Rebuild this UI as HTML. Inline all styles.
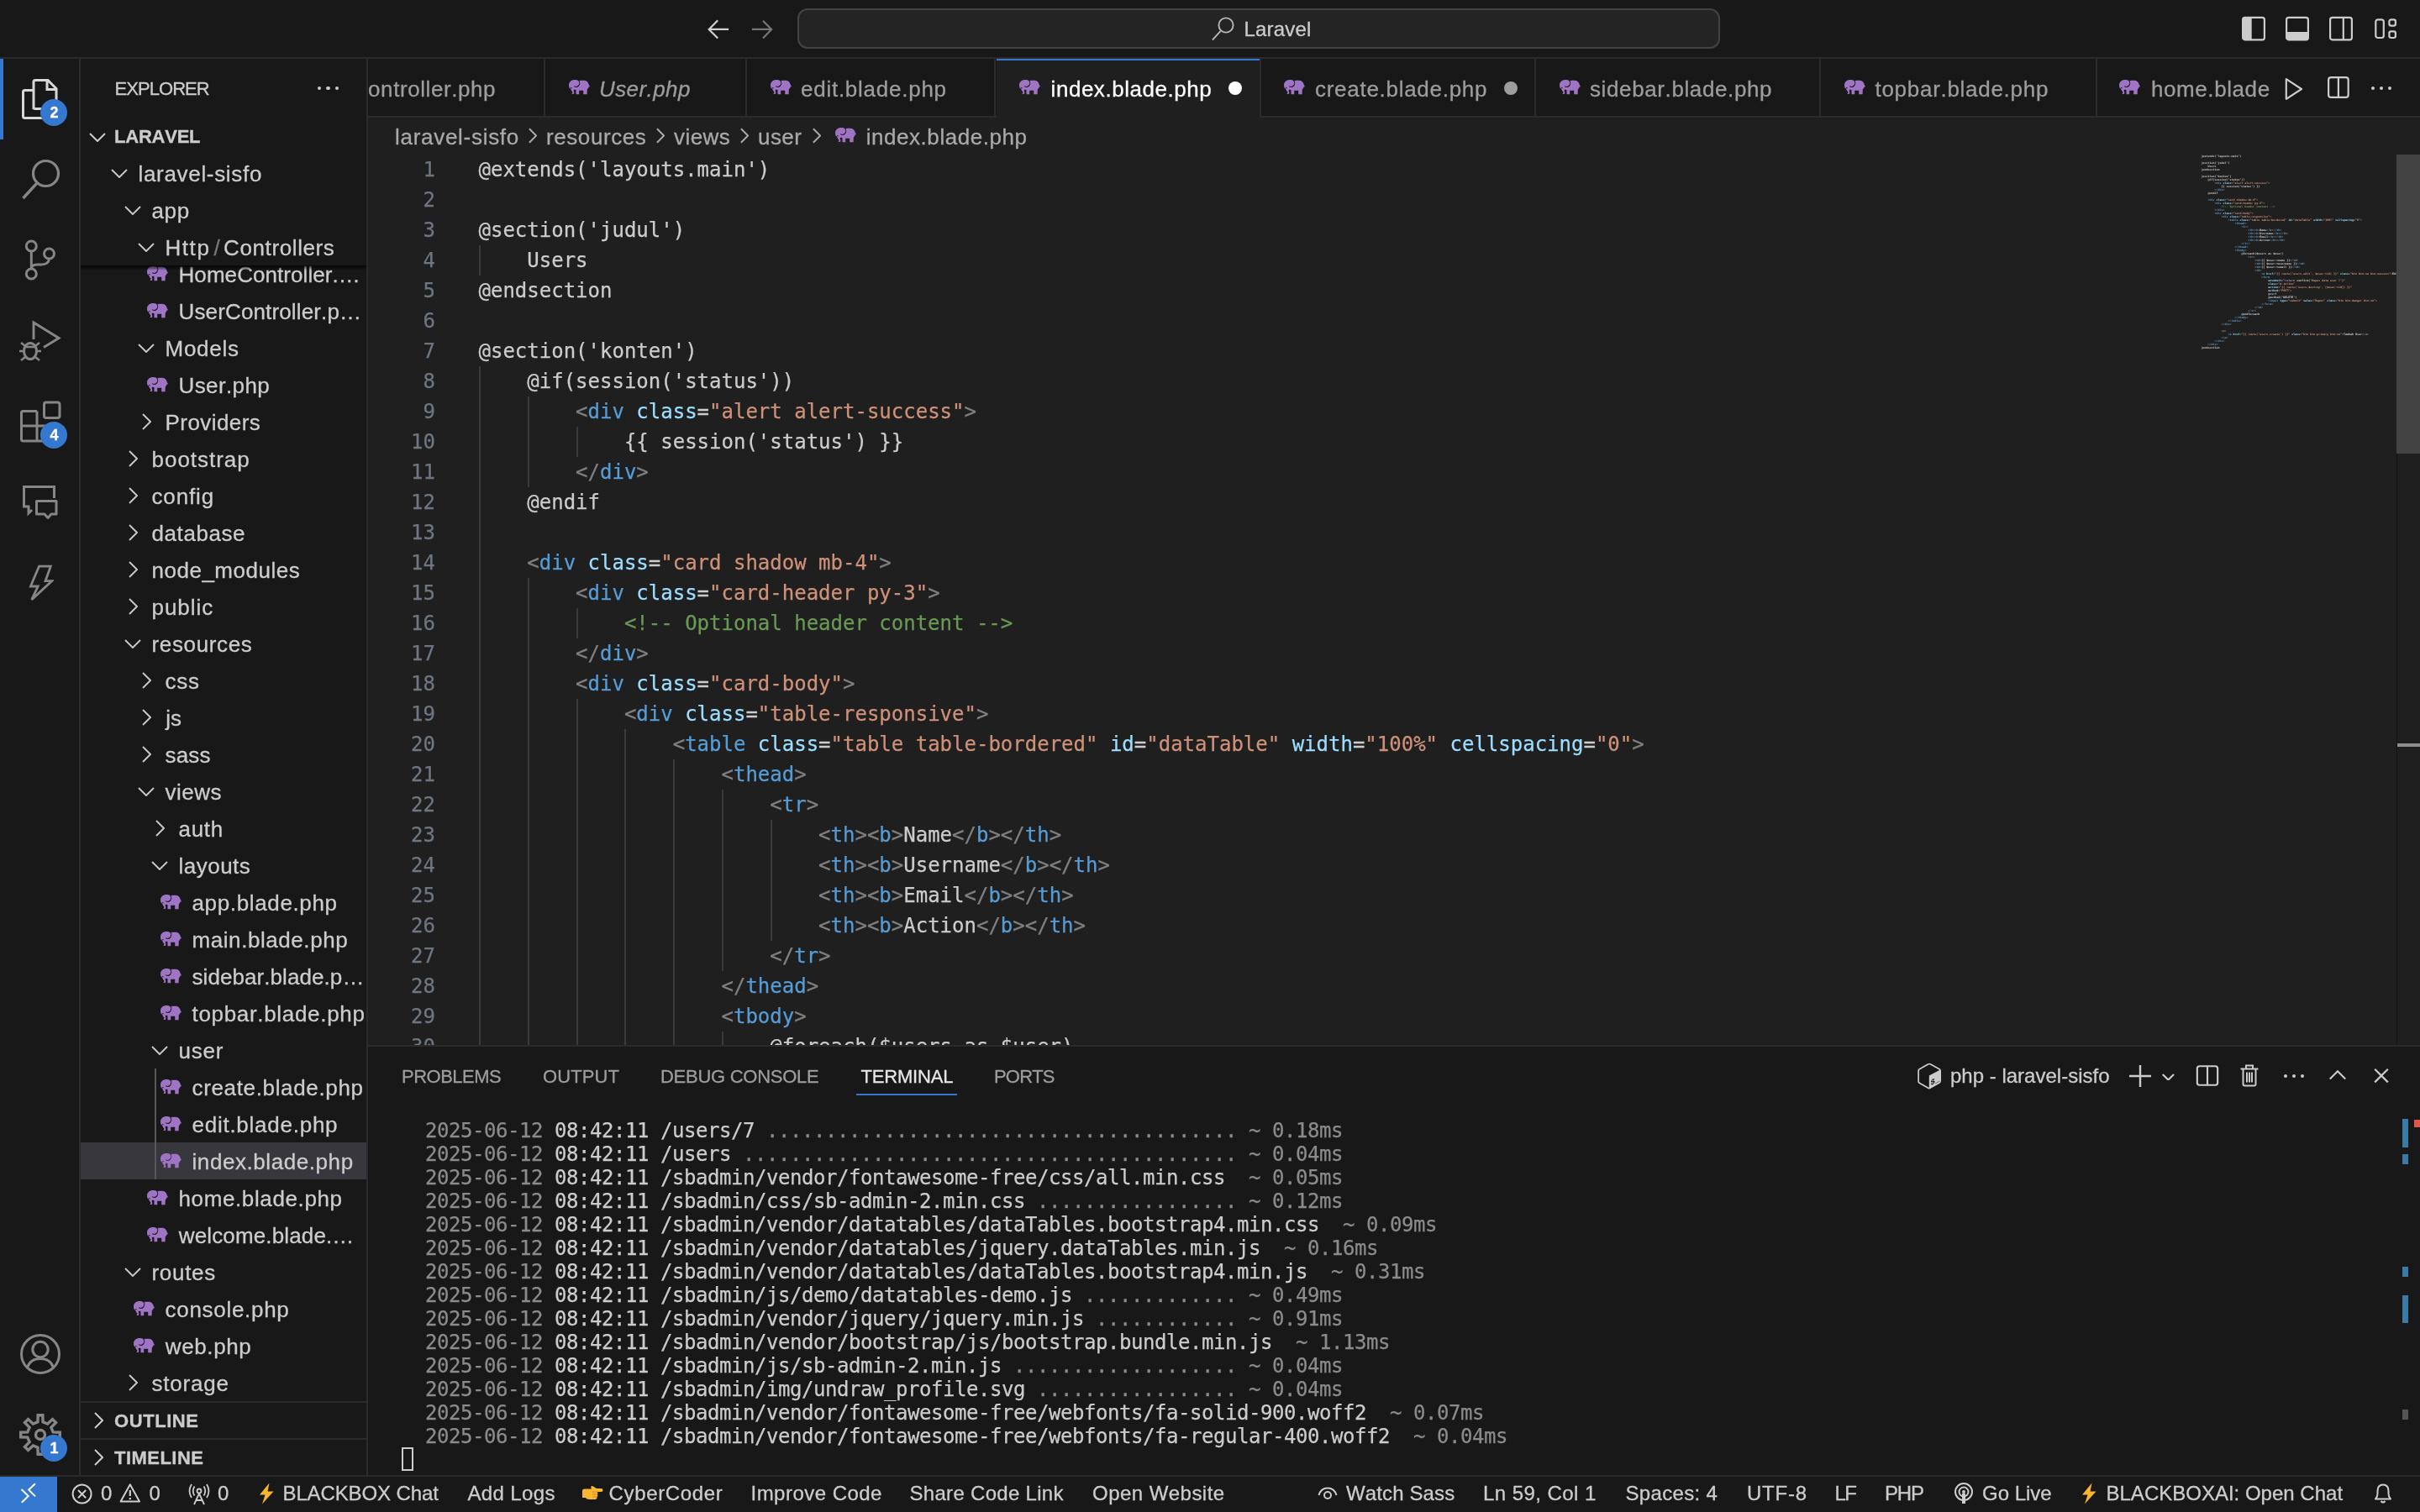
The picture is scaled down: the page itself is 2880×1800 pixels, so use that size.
<!DOCTYPE html>
<html lang="en"><head><meta charset="utf-8"><title>index.blade.php — Laravel</title>
<style>
html,body{margin:0;padding:0}
body{width:2880px;height:1800px;overflow:hidden;position:relative;background:#181818;font-family:"Liberation Sans",sans-serif;font-kerning:none;font-variant-ligatures:none;-webkit-font-smoothing:antialiased}
#w{position:absolute;left:0;top:0;width:2880px;height:1800px;will-change:transform}
.b{position:absolute;display:block}
.t{position:absolute;white-space:pre;display:block;-webkit-text-stroke:0.300px currentColor}
.ln{position:absolute;left:438px;width:80px;-webkit-text-stroke:0.250px currentColor;text-align:right;font:24px/36px "DejaVu Sans Mono","Liberation Mono",monospace;color:#6e7681;white-space:pre}
.cl{position:absolute;-webkit-text-stroke:0.250px currentColor;font:24px/36px "DejaVu Sans Mono","Liberation Mono",monospace;white-space:pre;color:#ccc}
.tm{position:absolute;-webkit-text-stroke:0.250px currentColor;left:506px;font:24px/28px "DejaVu Sans Mono","Liberation Mono",monospace;letter-spacing:-0.450px;white-space:pre;color:#ccc}
.mm{position:absolute;left:2619.500px;top:184px;width:232px;height:240px;overflow:hidden;font:bold 3.320px/4px "DejaVu Sans Mono","Liberation Mono",monospace}
.mm div{height:4px;white-space:pre}
</style></head>
<body>
<div id="w">
<div class="b" style="left:0px;top:0px;width:2880px;height:68px;background:#181818;"></div>
<div class="b" style="left:0px;top:68px;width:2880px;height:2px;background:#2b2b2b;"></div>
<svg class="b" style="left:840px;top:23px;" width="30" height="24" viewBox="0 0 30 24"><path d="M14.200 1.300L3.700 11.900L14.200 22.600M3.700 11.900H27.100" fill="none" stroke="#d0d0d0" stroke-width="2.200"/></svg>
<svg class="b" style="left:893px;top:23px;" width="30" height="24" viewBox="0 0 30 24"><path d="M15 1.800L25.200 11.900L15 22.600M25.200 11.900H1.900" fill="none" stroke="#767676" stroke-width="2.200"/></svg>
<div class="b" style="left:949px;top:10px;width:1098px;height:48px;box-sizing:border-box;background:#242424;border:2px solid #434343;border-radius:12px"></div>
<svg class="b" style="left:1441.3px;top:18.5px;" width="30" height="30" viewBox="0 0 30 30"><circle cx="18" cy="11" r="8.600" fill="none" stroke="#b8b8b8" stroke-width="1.900"/><path d="M11.600 17.900L1.900 28.700" stroke="#b8b8b8" stroke-width="1.900" fill="none"/></svg>
<span class="t" style="left:1480.5px;top:19px;font-size:24px;line-height:31px;color:#ccc;letter-spacing:0.173px;">Laravel</span>
<svg class="b" style="left:2667px;top:19px;" width="30" height="30" viewBox="0 0 30 30"><rect x="2.100" y="1.900" width="25.800" height="26.400" rx="2.600" fill="none" stroke="#ccc" stroke-width="2.200"/><path d="M4.500 2H12.700V28.200H4.500Q2.200 28.200 2.200 25.800V4.400Q2.200 2 4.500 2Z" fill="#ccc"/></svg>
<svg class="b" style="left:2719px;top:19px;" width="30" height="30" viewBox="0 0 30 30"><rect x="2.100" y="1.900" width="25.800" height="26.400" rx="2.600" fill="none" stroke="#ccc" stroke-width="2.200"/><path d="M2.200 18.900H27.800V25.800Q27.800 28.200 25.500 28.200H4.500Q2.200 28.200 2.200 25.800Z" fill="#ccc"/></svg>
<svg class="b" style="left:2771px;top:19px;" width="30" height="30" viewBox="0 0 30 30"><rect x="2.100" y="1.900" width="25.800" height="26.400" rx="2.600" fill="none" stroke="#ccc" stroke-width="2.200"/><path d="M17.800 2V28" stroke="#ccc" stroke-width="2.200"/></svg>
<svg class="b" style="left:2825px;top:21px;" width="30" height="27" viewBox="0 0 30 27"><rect x="2.300" y="2.400" width="9.500" height="21.600" rx="2.500" fill="none" stroke="#ccc" stroke-width="2.200"/><rect x="18.400" y="2.400" width="7.500" height="7.200" rx="2.200" fill="none" stroke="#ccc" stroke-width="2.200"/><rect x="18.400" y="16.300" width="7.500" height="7.700" rx="2.200" fill="none" stroke="#ccc" stroke-width="2.200"/></svg>
<div class="b" style="left:0px;top:70px;width:94px;height:1686px;background:#181818;"></div>
<div class="b" style="left:94px;top:70px;width:2px;height:1686px;background:#2b2b2b;"></div>
<div class="b" style="left:0px;top:70px;width:4px;height:96px;background:#3478cf;"></div>
<svg class="b" style="left:24px;top:92px;" width="48" height="52" viewBox="0 0 48 52"><path d="M16 38V5.5Q16 3.5 18 3.5H33L43 13.5V35.5Q43 37.5 41 37.5H18Q16 37.5 16 35.5M32 4V14.5H43" fill="none" stroke="#d7d7d7" stroke-width="3"/><path d="M15 15.5H5.5Q3.5 15.5 3.5 17.5V46.500Q3.5 48.5 5.5 48.5H28Q30 48.5 30 46.5V38" fill="none" stroke="#d7d7d7" stroke-width="3"/></svg>
<svg class="b" style="left:24px;top:188px;" width="50" height="52" viewBox="0 0 50 52"><circle cx="30.5" cy="18.5" r="15" fill="none" stroke="#868686" stroke-width="3.2"/><path d="M20 30L3.5 48" stroke="#868686" stroke-width="3.4" fill="none"/></svg>
<svg class="b" style="left:28px;top:284px;" width="42" height="52" viewBox="0 0 42 52"><circle cx="9.3" cy="9" r="6" fill="none" stroke="#868686" stroke-width="3"/><circle cx="30.5" cy="18" r="6" fill="none" stroke="#868686" stroke-width="3"/><circle cx="9.3" cy="42" r="6" fill="none" stroke="#868686" stroke-width="3"/><path d="M9.3 15V36M30.5 24Q30 31 21 31H16Q9.5 31 9.3 36" fill="none" stroke="#868686" stroke-width="3"/></svg>
<svg class="b" style="left:22px;top:380px;" width="52" height="52" viewBox="0 0 52 52"><path d="M18 24V4L48 22.500L30 33.500" fill="none" stroke="#868686" stroke-width="3"/><ellipse cx="14" cy="38" rx="7.5" ry="9.5" fill="none" stroke="#868686" stroke-width="3"/><path d="M7 33H21M1 38H6.5M21.5 38H27M3 28L8 32M25 28L20 32M3 49L8 45M25 49L20 45" fill="none" stroke="#868686" stroke-width="2.6"/></svg>
<svg class="b" style="left:23px;top:477px;" width="50" height="50" viewBox="0 0 50 50"><path d="M21 12.5H4.5Q2.500 12.5 2.500 14.5V46Q2.5 48 4.500 48H36.500Q38.500 48 38.500 46V30H2.500M21 12.500V48" fill="none" stroke="#868686" stroke-width="3"/><rect x="29.5" y="2" width="18.5" height="18.500" rx="2.5" fill="none" stroke="#868686" stroke-width="3"/></svg>
<svg class="b" style="left:26px;top:576px;" width="44" height="44" viewBox="0 0 44 44"><path d="M38.500 17V3.500H2.500V27H8V35L12 31" fill="none" stroke="#868686" stroke-width="3"/><path d="M17.500 20.500H41V36H35L31 40.500L27 36H17.500Z" fill="none" stroke="#868686" stroke-width="3" stroke-linejoin="round"/></svg>
<svg class="b" style="left:34px;top:671px;" width="30" height="46" viewBox="0 0 30 46"><path d="M12.500 3.200H26.300L20 20.700H27.600L3.700 42.900L11.200 27H2.400Z" fill="none" stroke="#868686" stroke-width="2.800" stroke-linejoin="miter"/></svg>
<svg class="b" style="left:23px;top:1587px;" width="50" height="50" viewBox="0 0 50 50"><circle cx="25" cy="25" r="22.500" fill="none" stroke="#868686" stroke-width="3"/><circle cx="25" cy="19.500" r="9.200" fill="none" stroke="#868686" stroke-width="3"/><path d="M9.500 41Q13 30.500 25 30.500Q37 30.500 40.500 41" fill="none" stroke="#868686" stroke-width="3"/></svg>
<svg class="b" style="left:23px;top:1683px;" width="50" height="50" viewBox="0 0 50 50"><path d="M22.2 1.7L27.8 1.7L28.1 9.8L33.6 12.1L39.5 6.5L43.5 10.5L37.9 16.4L40.2 21.9L48.3 22.2L48.3 27.8L40.2 28.1L37.9 33.6L43.5 39.5L39.5 43.5L33.6 37.9L28.1 40.2L27.8 48.3L22.2 48.3L21.9 40.2L16.4 37.9L10.5 43.5L6.5 39.5L12.1 33.6L9.8 28.1L1.7 27.8L1.7 22.2L9.8 21.9L12.1 16.4L6.5 10.5L10.5 6.5L16.4 12.1L21.9 9.8Z" fill="none" stroke="#868686" stroke-width="3.400" stroke-linejoin="miter"/><circle cx="25" cy="25" r="5.500" fill="none" stroke="#868686" stroke-width="3.400"/></svg>
<div class="b" style="left:47.5px;top:117.7px;width:32px;height:32px;border-radius:16px;background:#3478cf"></div>
<span class="t" style="left:59.5px;top:122px;font-size:18px;line-height:24px;color:#fff;letter-spacing:0.000px;font-weight:700;">2</span>
<div class="b" style="left:47.5px;top:502px;width:32px;height:32px;border-radius:16px;background:#3478cf"></div>
<span class="t" style="left:59.5px;top:506px;font-size:18px;line-height:24px;color:#fff;letter-spacing:0.000px;font-weight:700;">4</span>
<div class="b" style="left:47.5px;top:1708px;width:32px;height:32px;border-radius:16px;background:#3478cf"></div>
<span class="t" style="left:59.5px;top:1712px;font-size:18px;line-height:24px;color:#fff;letter-spacing:0.000px;font-weight:700;">1</span>
<div class="b" style="left:96px;top:70px;width:340px;height:1686px;background:#181818;"></div>
<div class="b" style="left:436px;top:70px;width:2px;height:1686px;background:#2b2b2b;"></div>
<span class="t" style="left:136.5px;top:91px;font-size:22px;line-height:29px;color:#ccc;letter-spacing:-0.946px;">EXPLORER</span>
<div class="b" style="left:378px;top:102.800px;width:4.400px;height:4.400px;border-radius:2.200px;background:#ccc"></div>
<div class="b" style="left:388.3px;top:102.800px;width:4.400px;height:4.400px;border-radius:2.200px;background:#ccc"></div>
<div class="b" style="left:398.6px;top:102.800px;width:4.400px;height:4.400px;border-radius:2.200px;background:#ccc"></div>
<div class="b" style="left:96px;top:316px;width:340px;height:1352px;overflow:hidden"><div class="b" style="left:-96px;top:-316px;width:436px;height:1800px">
<div class="b" style="left:96px;top:1360px;width:340px;height:44px;background:#37373d;"></div>
<svg class="b" style="left:175px;top:317px;" width="25" height="18" viewBox="0 0 25 18"><path fill="#a074c4" d="M0 6.500C0 2.500 3 0 7 0C9.500 0 11 0.500 12 1.500C12.800 1 13.500 0.700 14.500 0.700L18.500 0.700C21.500 0.900 23.300 3.500 23.900 6.300C24.500 6.800 24.900 7.500 25 8.400L23.900 7.900C23.600 9 22.600 10.500 21.800 11.500L21.600 17.200L17.200 17.200L17.200 12.800L12.200 12.800L12.200 17.200L8.600 17.200L8.400 12C7.500 11.600 6.500 11.600 5.800 12C5.600 13 5.900 14 6.300 15C6.600 16.400 5.600 17.300 4 17L3.600 16C4.600 15.800 4.600 15 4.100 14.200C3 12.800 2.200 11.500 2 10.200L0.900 10.200C0.300 9.200 0 8 0 6.500Z"/><path fill="none" stroke="#181818" stroke-width="1.100" d="M11.700 1C13.100 2.600 13 5.400 11.500 7C10.200 8.400 8 8.800 6.300 7.600"/><path fill="#181818" d="M1.900 9.300L3.600 9.100L3.300 10.300L2 10.300Z"/></svg>
<span class="t" style="left:212.5px;top:310px;font-size:26px;line-height:34px;color:#ccc;letter-spacing:0.071px;">HomeController.…</span>
<svg class="b" style="left:175px;top:361px;" width="25" height="18" viewBox="0 0 25 18"><path fill="#a074c4" d="M0 6.500C0 2.500 3 0 7 0C9.500 0 11 0.500 12 1.500C12.800 1 13.500 0.700 14.500 0.700L18.500 0.700C21.500 0.900 23.300 3.500 23.900 6.300C24.500 6.800 24.900 7.500 25 8.400L23.900 7.900C23.600 9 22.600 10.500 21.800 11.500L21.600 17.200L17.200 17.200L17.200 12.800L12.200 12.800L12.200 17.200L8.600 17.200L8.400 12C7.500 11.600 6.500 11.600 5.800 12C5.600 13 5.900 14 6.300 15C6.600 16.400 5.600 17.300 4 17L3.600 16C4.600 15.800 4.600 15 4.100 14.200C3 12.800 2.200 11.500 2 10.200L0.900 10.200C0.300 9.200 0 8 0 6.500Z"/><path fill="none" stroke="#181818" stroke-width="1.100" d="M11.700 1C13.100 2.600 13 5.400 11.500 7C10.200 8.400 8 8.800 6.300 7.600"/><path fill="#181818" d="M1.900 9.300L3.600 9.100L3.300 10.300L2 10.300Z"/></svg>
<span class="t" style="left:212.5px;top:354px;font-size:26px;line-height:34px;color:#ccc;letter-spacing:0.141px;">UserController.p…</span>
<svg class="b" style="left:164px;top:409.3px;" width="20" height="11" viewBox="0 0 20 11"><path d="M1 1L10 10L19 1" fill="none" stroke="#c5c5c5" stroke-width="2"/></svg>
<span class="t" style="left:196.5px;top:398px;font-size:26px;line-height:34px;color:#ccc;letter-spacing:0.744px;">Models</span>
<svg class="b" style="left:175px;top:449px;" width="25" height="18" viewBox="0 0 25 18"><path fill="#a074c4" d="M0 6.500C0 2.500 3 0 7 0C9.500 0 11 0.500 12 1.500C12.800 1 13.500 0.700 14.500 0.700L18.500 0.700C21.500 0.900 23.300 3.500 23.900 6.300C24.500 6.800 24.900 7.500 25 8.400L23.900 7.900C23.600 9 22.600 10.500 21.800 11.500L21.600 17.200L17.200 17.200L17.200 12.800L12.200 12.800L12.200 17.200L8.600 17.200L8.400 12C7.500 11.600 6.500 11.600 5.800 12C5.600 13 5.900 14 6.300 15C6.600 16.400 5.600 17.300 4 17L3.600 16C4.600 15.800 4.600 15 4.100 14.200C3 12.800 2.200 11.500 2 10.200L0.900 10.200C0.300 9.200 0 8 0 6.500Z"/><path fill="none" stroke="#181818" stroke-width="1.100" d="M11.700 1C13.100 2.600 13 5.400 11.500 7C10.200 8.400 8 8.800 6.300 7.600"/><path fill="#181818" d="M1.900 9.300L3.600 9.100L3.300 10.300L2 10.300Z"/></svg>
<span class="t" style="left:212.5px;top:442px;font-size:26px;line-height:34px;color:#ccc;letter-spacing:0.397px;">User.php</span>
<svg class="b" style="left:169px;top:492px;" width="11" height="20" viewBox="0 0 11 20"><path d="M1 1L10 10L1 19" fill="none" stroke="#c5c5c5" stroke-width="2"/></svg>
<span class="t" style="left:196.5px;top:486px;font-size:26px;line-height:34px;color:#ccc;letter-spacing:0.440px;">Providers</span>
<svg class="b" style="left:153px;top:536px;" width="11" height="20" viewBox="0 0 11 20"><path d="M1 1L10 10L1 19" fill="none" stroke="#c5c5c5" stroke-width="2"/></svg>
<span class="t" style="left:180.5px;top:530px;font-size:26px;line-height:34px;color:#ccc;letter-spacing:0.983px;">bootstrap</span>
<svg class="b" style="left:153px;top:580px;" width="11" height="20" viewBox="0 0 11 20"><path d="M1 1L10 10L1 19" fill="none" stroke="#c5c5c5" stroke-width="2"/></svg>
<span class="t" style="left:180.5px;top:574px;font-size:26px;line-height:34px;color:#ccc;letter-spacing:0.864px;">config</span>
<svg class="b" style="left:153px;top:624px;" width="11" height="20" viewBox="0 0 11 20"><path d="M1 1L10 10L1 19" fill="none" stroke="#c5c5c5" stroke-width="2"/></svg>
<span class="t" style="left:180.5px;top:618px;font-size:26px;line-height:34px;color:#ccc;letter-spacing:0.580px;">database</span>
<svg class="b" style="left:153px;top:668px;" width="11" height="20" viewBox="0 0 11 20"><path d="M1 1L10 10L1 19" fill="none" stroke="#c5c5c5" stroke-width="2"/></svg>
<span class="t" style="left:180.5px;top:662px;font-size:26px;line-height:34px;color:#ccc;letter-spacing:0.515px;">node_modules</span>
<svg class="b" style="left:153px;top:712px;" width="11" height="20" viewBox="0 0 11 20"><path d="M1 1L10 10L1 19" fill="none" stroke="#c5c5c5" stroke-width="2"/></svg>
<span class="t" style="left:180.5px;top:706px;font-size:26px;line-height:34px;color:#ccc;letter-spacing:0.976px;">public</span>
<svg class="b" style="left:148px;top:761.3px;" width="20" height="11" viewBox="0 0 20 11"><path d="M1 1L10 10L19 1" fill="none" stroke="#c5c5c5" stroke-width="2"/></svg>
<span class="t" style="left:180.5px;top:750px;font-size:26px;line-height:34px;color:#ccc;letter-spacing:0.650px;">resources</span>
<svg class="b" style="left:169px;top:800px;" width="11" height="20" viewBox="0 0 11 20"><path d="M1 1L10 10L1 19" fill="none" stroke="#c5c5c5" stroke-width="2"/></svg>
<span class="t" style="left:196.5px;top:794px;font-size:26px;line-height:34px;color:#ccc;letter-spacing:0.750px;">css</span>
<svg class="b" style="left:169px;top:844px;" width="11" height="20" viewBox="0 0 11 20"><path d="M1 1L10 10L1 19" fill="none" stroke="#c5c5c5" stroke-width="2"/></svg>
<span class="t" style="left:197.3px;top:838px;font-size:26px;line-height:34px;color:#ccc;letter-spacing:0.000px;">js</span>
<svg class="b" style="left:169px;top:888px;" width="11" height="20" viewBox="0 0 11 20"><path d="M1 1L10 10L1 19" fill="none" stroke="#c5c5c5" stroke-width="2"/></svg>
<span class="t" style="left:196.5px;top:882px;font-size:26px;line-height:34px;color:#ccc;letter-spacing:0.147px;">sass</span>
<svg class="b" style="left:164px;top:937.3px;" width="20" height="11" viewBox="0 0 20 11"><path d="M1 1L10 10L19 1" fill="none" stroke="#c5c5c5" stroke-width="2"/></svg>
<span class="t" style="left:196.5px;top:926px;font-size:26px;line-height:34px;color:#ccc;letter-spacing:0.500px;">views</span>
<svg class="b" style="left:185px;top:976px;" width="11" height="20" viewBox="0 0 11 20"><path d="M1 1L10 10L1 19" fill="none" stroke="#c5c5c5" stroke-width="2"/></svg>
<span class="t" style="left:212.5px;top:970px;font-size:26px;line-height:34px;color:#ccc;letter-spacing:0.680px;">auth</span>
<svg class="b" style="left:180px;top:1025.3px;" width="20" height="11" viewBox="0 0 20 11"><path d="M1 1L10 10L19 1" fill="none" stroke="#c5c5c5" stroke-width="2"/></svg>
<span class="t" style="left:212.5px;top:1014px;font-size:26px;line-height:34px;color:#ccc;letter-spacing:0.487px;">layouts</span>
<svg class="b" style="left:191px;top:1065px;" width="25" height="18" viewBox="0 0 25 18"><path fill="#a074c4" d="M0 6.500C0 2.500 3 0 7 0C9.500 0 11 0.500 12 1.500C12.800 1 13.500 0.700 14.500 0.700L18.500 0.700C21.500 0.900 23.300 3.500 23.900 6.300C24.500 6.800 24.900 7.500 25 8.400L23.900 7.900C23.600 9 22.600 10.500 21.800 11.500L21.600 17.200L17.200 17.200L17.200 12.800L12.200 12.800L12.200 17.200L8.600 17.200L8.400 12C7.500 11.600 6.500 11.600 5.800 12C5.600 13 5.900 14 6.300 15C6.600 16.400 5.600 17.300 4 17L3.600 16C4.600 15.800 4.600 15 4.100 14.200C3 12.800 2.200 11.500 2 10.200L0.900 10.200C0.300 9.200 0 8 0 6.500Z"/><path fill="none" stroke="#181818" stroke-width="1.100" d="M11.700 1C13.100 2.600 13 5.400 11.500 7C10.200 8.400 8 8.800 6.300 7.600"/><path fill="#181818" d="M1.900 9.300L3.600 9.100L3.300 10.300L2 10.300Z"/></svg>
<span class="t" style="left:228.5px;top:1058px;font-size:26px;line-height:34px;color:#ccc;letter-spacing:0.643px;">app.blade.php</span>
<svg class="b" style="left:191px;top:1109px;" width="25" height="18" viewBox="0 0 25 18"><path fill="#a074c4" d="M0 6.500C0 2.500 3 0 7 0C9.500 0 11 0.500 12 1.500C12.800 1 13.500 0.700 14.500 0.700L18.500 0.700C21.500 0.900 23.300 3.500 23.900 6.300C24.500 6.800 24.900 7.500 25 8.400L23.900 7.900C23.600 9 22.600 10.500 21.800 11.500L21.600 17.200L17.200 17.200L17.200 12.800L12.200 12.800L12.200 17.200L8.600 17.200L8.400 12C7.500 11.600 6.500 11.600 5.800 12C5.600 13 5.900 14 6.300 15C6.600 16.400 5.600 17.300 4 17L3.600 16C4.600 15.800 4.600 15 4.100 14.200C3 12.800 2.200 11.500 2 10.200L0.900 10.200C0.300 9.200 0 8 0 6.500Z"/><path fill="none" stroke="#181818" stroke-width="1.100" d="M11.700 1C13.100 2.600 13 5.400 11.500 7C10.200 8.400 8 8.800 6.300 7.600"/><path fill="#181818" d="M1.900 9.300L3.600 9.100L3.300 10.300L2 10.300Z"/></svg>
<span class="t" style="left:228.5px;top:1102px;font-size:26px;line-height:34px;color:#ccc;letter-spacing:0.568px;">main.blade.php</span>
<svg class="b" style="left:191px;top:1153px;" width="25" height="18" viewBox="0 0 25 18"><path fill="#a074c4" d="M0 6.500C0 2.500 3 0 7 0C9.500 0 11 0.500 12 1.500C12.800 1 13.500 0.700 14.500 0.700L18.500 0.700C21.500 0.900 23.300 3.500 23.900 6.300C24.500 6.800 24.900 7.500 25 8.400L23.900 7.900C23.600 9 22.600 10.500 21.800 11.500L21.600 17.200L17.200 17.200L17.200 12.800L12.200 12.800L12.200 17.200L8.600 17.200L8.400 12C7.500 11.600 6.500 11.600 5.800 12C5.600 13 5.900 14 6.300 15C6.600 16.400 5.600 17.300 4 17L3.600 16C4.600 15.800 4.600 15 4.100 14.200C3 12.800 2.200 11.500 2 10.200L0.900 10.200C0.300 9.200 0 8 0 6.500Z"/><path fill="none" stroke="#181818" stroke-width="1.100" d="M11.700 1C13.100 2.600 13 5.400 11.500 7C10.200 8.400 8 8.800 6.300 7.600"/><path fill="#181818" d="M1.900 9.300L3.600 9.100L3.300 10.300L2 10.300Z"/></svg>
<span class="t" style="left:228.5px;top:1146px;font-size:26px;line-height:34px;color:#ccc;letter-spacing:0.072px;">sidebar.blade.p…</span>
<svg class="b" style="left:191px;top:1197px;" width="25" height="18" viewBox="0 0 25 18"><path fill="#a074c4" d="M0 6.500C0 2.500 3 0 7 0C9.500 0 11 0.500 12 1.500C12.800 1 13.500 0.700 14.500 0.700L18.500 0.700C21.500 0.900 23.300 3.500 23.900 6.300C24.500 6.800 24.900 7.500 25 8.400L23.900 7.900C23.600 9 22.600 10.500 21.800 11.500L21.600 17.200L17.200 17.200L17.200 12.800L12.200 12.800L12.200 17.200L8.600 17.200L8.400 12C7.500 11.600 6.500 11.600 5.800 12C5.600 13 5.900 14 6.300 15C6.600 16.400 5.600 17.300 4 17L3.600 16C4.600 15.800 4.600 15 4.100 14.200C3 12.800 2.200 11.500 2 10.200L0.900 10.200C0.300 9.200 0 8 0 6.500Z"/><path fill="none" stroke="#181818" stroke-width="1.100" d="M11.700 1C13.100 2.600 13 5.400 11.500 7C10.200 8.400 8 8.800 6.300 7.600"/><path fill="#181818" d="M1.900 9.300L3.600 9.100L3.300 10.300L2 10.300Z"/></svg>
<span class="t" style="left:228.5px;top:1190px;font-size:26px;line-height:34px;color:#ccc;letter-spacing:0.680px;">topbar.blade.php</span>
<svg class="b" style="left:180px;top:1245.3px;" width="20" height="11" viewBox="0 0 20 11"><path d="M1 1L10 10L19 1" fill="none" stroke="#c5c5c5" stroke-width="2"/></svg>
<span class="t" style="left:212.5px;top:1234px;font-size:26px;line-height:34px;color:#ccc;letter-spacing:0.767px;">user</span>
<svg class="b" style="left:191px;top:1285px;" width="25" height="18" viewBox="0 0 25 18"><path fill="#a074c4" d="M0 6.500C0 2.500 3 0 7 0C9.500 0 11 0.500 12 1.500C12.800 1 13.500 0.700 14.500 0.700L18.500 0.700C21.500 0.900 23.300 3.500 23.900 6.300C24.500 6.800 24.900 7.500 25 8.400L23.900 7.900C23.600 9 22.600 10.500 21.800 11.500L21.600 17.200L17.200 17.200L17.200 12.800L12.200 12.800L12.200 17.200L8.600 17.200L8.400 12C7.500 11.600 6.500 11.600 5.800 12C5.600 13 5.900 14 6.300 15C6.600 16.400 5.600 17.300 4 17L3.600 16C4.600 15.800 4.600 15 4.100 14.200C3 12.800 2.200 11.500 2 10.200L0.900 10.200C0.300 9.200 0 8 0 6.500Z"/><path fill="none" stroke="#181818" stroke-width="1.100" d="M11.700 1C13.100 2.600 13 5.400 11.500 7C10.200 8.400 8 8.800 6.300 7.600"/><path fill="#181818" d="M1.900 9.300L3.600 9.100L3.300 10.300L2 10.300Z"/></svg>
<span class="t" style="left:228.5px;top:1278px;font-size:26px;line-height:34px;color:#ccc;letter-spacing:0.651px;">create.blade.php</span>
<svg class="b" style="left:191px;top:1329px;" width="25" height="18" viewBox="0 0 25 18"><path fill="#a074c4" d="M0 6.500C0 2.500 3 0 7 0C9.500 0 11 0.500 12 1.500C12.800 1 13.500 0.700 14.500 0.700L18.500 0.700C21.500 0.900 23.300 3.500 23.900 6.300C24.500 6.800 24.900 7.500 25 8.400L23.900 7.900C23.600 9 22.600 10.500 21.800 11.500L21.600 17.200L17.200 17.200L17.200 12.800L12.200 12.800L12.200 17.200L8.600 17.200L8.400 12C7.500 11.600 6.500 11.600 5.800 12C5.600 13 5.900 14 6.300 15C6.600 16.400 5.600 17.300 4 17L3.600 16C4.600 15.800 4.600 15 4.100 14.200C3 12.800 2.200 11.500 2 10.200L0.900 10.200C0.300 9.200 0 8 0 6.500Z"/><path fill="none" stroke="#181818" stroke-width="1.100" d="M11.700 1C13.100 2.600 13 5.400 11.500 7C10.200 8.400 8 8.800 6.300 7.600"/><path fill="#181818" d="M1.900 9.300L3.600 9.100L3.300 10.300L2 10.300Z"/></svg>
<span class="t" style="left:228.5px;top:1322px;font-size:26px;line-height:34px;color:#ccc;letter-spacing:0.745px;">edit.blade.php</span>
<svg class="b" style="left:191px;top:1373px;" width="25" height="18" viewBox="0 0 25 18"><path fill="#a074c4" d="M0 6.500C0 2.500 3 0 7 0C9.500 0 11 0.500 12 1.500C12.800 1 13.500 0.700 14.500 0.700L18.500 0.700C21.500 0.900 23.300 3.500 23.900 6.300C24.500 6.800 24.900 7.500 25 8.400L23.900 7.900C23.600 9 22.600 10.500 21.800 11.500L21.600 17.200L17.200 17.200L17.200 12.800L12.200 12.800L12.200 17.200L8.600 17.200L8.400 12C7.500 11.600 6.500 11.600 5.800 12C5.600 13 5.900 14 6.300 15C6.600 16.400 5.600 17.300 4 17L3.600 16C4.600 15.800 4.600 15 4.100 14.200C3 12.800 2.200 11.500 2 10.200L0.900 10.200C0.300 9.200 0 8 0 6.500Z"/><path fill="none" stroke="#37373d" stroke-width="1.100" d="M11.700 1C13.100 2.600 13 5.400 11.500 7C10.200 8.400 8 8.800 6.300 7.600"/><path fill="#37373d" d="M1.900 9.300L3.600 9.100L3.300 10.300L2 10.300Z"/></svg>
<span class="t" style="left:228.5px;top:1366px;font-size:26px;line-height:34px;color:#ccc;letter-spacing:0.571px;">index.blade.php</span>
<svg class="b" style="left:175px;top:1417px;" width="25" height="18" viewBox="0 0 25 18"><path fill="#a074c4" d="M0 6.500C0 2.500 3 0 7 0C9.500 0 11 0.500 12 1.500C12.800 1 13.500 0.700 14.500 0.700L18.500 0.700C21.500 0.900 23.300 3.500 23.900 6.300C24.500 6.800 24.900 7.500 25 8.400L23.900 7.900C23.600 9 22.600 10.500 21.800 11.500L21.600 17.200L17.200 17.200L17.200 12.800L12.200 12.800L12.200 17.200L8.600 17.200L8.400 12C7.500 11.600 6.500 11.600 5.800 12C5.600 13 5.900 14 6.300 15C6.600 16.400 5.600 17.300 4 17L3.600 16C4.600 15.800 4.600 15 4.100 14.200C3 12.800 2.200 11.500 2 10.200L0.900 10.200C0.300 9.200 0 8 0 6.500Z"/><path fill="none" stroke="#181818" stroke-width="1.100" d="M11.700 1C13.100 2.600 13 5.400 11.500 7C10.200 8.400 8 8.800 6.300 7.600"/><path fill="#181818" d="M1.900 9.300L3.600 9.100L3.300 10.300L2 10.300Z"/></svg>
<span class="t" style="left:212.5px;top:1410px;font-size:26px;line-height:34px;color:#ccc;letter-spacing:0.618px;">home.blade.php</span>
<svg class="b" style="left:175px;top:1461px;" width="25" height="18" viewBox="0 0 25 18"><path fill="#a074c4" d="M0 6.500C0 2.500 3 0 7 0C9.500 0 11 0.500 12 1.500C12.800 1 13.500 0.700 14.500 0.700L18.500 0.700C21.500 0.900 23.300 3.500 23.900 6.300C24.500 6.800 24.900 7.500 25 8.400L23.900 7.900C23.600 9 22.600 10.500 21.800 11.500L21.600 17.200L17.200 17.200L17.200 12.800L12.200 12.800L12.200 17.200L8.600 17.200L8.400 12C7.500 11.600 6.500 11.600 5.800 12C5.600 13 5.900 14 6.300 15C6.600 16.400 5.600 17.300 4 17L3.600 16C4.600 15.800 4.600 15 4.100 14.200C3 12.800 2.200 11.500 2 10.200L0.900 10.200C0.300 9.200 0 8 0 6.500Z"/><path fill="none" stroke="#181818" stroke-width="1.100" d="M11.700 1C13.100 2.600 13 5.400 11.500 7C10.200 8.400 8 8.800 6.300 7.600"/><path fill="#181818" d="M1.900 9.300L3.600 9.100L3.300 10.300L2 10.300Z"/></svg>
<span class="t" style="left:212.8px;top:1454px;font-size:26px;line-height:34px;color:#ccc;letter-spacing:0.137px;">welcome.blade.…</span>
<svg class="b" style="left:148px;top:1509.3px;" width="20" height="11" viewBox="0 0 20 11"><path d="M1 1L10 10L19 1" fill="none" stroke="#c5c5c5" stroke-width="2"/></svg>
<span class="t" style="left:180.5px;top:1498px;font-size:26px;line-height:34px;color:#ccc;letter-spacing:0.692px;">routes</span>
<svg class="b" style="left:159px;top:1549px;" width="25" height="18" viewBox="0 0 25 18"><path fill="#a074c4" d="M0 6.500C0 2.500 3 0 7 0C9.500 0 11 0.500 12 1.500C12.800 1 13.500 0.700 14.500 0.700L18.500 0.700C21.500 0.900 23.300 3.500 23.900 6.300C24.500 6.800 24.900 7.500 25 8.400L23.900 7.900C23.600 9 22.600 10.500 21.800 11.500L21.600 17.200L17.200 17.200L17.200 12.800L12.200 12.800L12.200 17.200L8.600 17.200L8.400 12C7.500 11.600 6.500 11.600 5.800 12C5.600 13 5.900 14 6.300 15C6.600 16.400 5.600 17.300 4 17L3.600 16C4.600 15.800 4.600 15 4.100 14.200C3 12.800 2.200 11.500 2 10.200L0.900 10.200C0.300 9.200 0 8 0 6.500Z"/><path fill="none" stroke="#181818" stroke-width="1.100" d="M11.700 1C13.100 2.600 13 5.400 11.500 7C10.200 8.400 8 8.800 6.300 7.600"/><path fill="#181818" d="M1.900 9.300L3.600 9.100L3.300 10.300L2 10.300Z"/></svg>
<span class="t" style="left:196.5px;top:1542px;font-size:26px;line-height:34px;color:#ccc;letter-spacing:0.708px;">console.php</span>
<svg class="b" style="left:159px;top:1593px;" width="25" height="18" viewBox="0 0 25 18"><path fill="#a074c4" d="M0 6.500C0 2.500 3 0 7 0C9.500 0 11 0.500 12 1.500C12.800 1 13.500 0.700 14.500 0.700L18.500 0.700C21.500 0.900 23.300 3.500 23.900 6.300C24.500 6.800 24.900 7.500 25 8.400L23.900 7.900C23.600 9 22.600 10.500 21.800 11.500L21.600 17.200L17.200 17.200L17.200 12.800L12.200 12.800L12.200 17.200L8.600 17.200L8.400 12C7.500 11.600 6.500 11.600 5.800 12C5.600 13 5.900 14 6.300 15C6.600 16.400 5.600 17.300 4 17L3.600 16C4.600 15.800 4.600 15 4.100 14.200C3 12.800 2.200 11.500 2 10.200L0.900 10.200C0.300 9.200 0 8 0 6.500Z"/><path fill="none" stroke="#181818" stroke-width="1.100" d="M11.700 1C13.100 2.600 13 5.400 11.500 7C10.200 8.400 8 8.800 6.300 7.600"/><path fill="#181818" d="M1.900 9.300L3.600 9.100L3.300 10.300L2 10.300Z"/></svg>
<span class="t" style="left:196.8px;top:1586px;font-size:26px;line-height:34px;color:#ccc;letter-spacing:0.623px;">web.php</span>
<svg class="b" style="left:153px;top:1636px;" width="11" height="20" viewBox="0 0 11 20"><path d="M1 1L10 10L1 19" fill="none" stroke="#c5c5c5" stroke-width="2"/></svg>
<span class="t" style="left:180.5px;top:1630px;font-size:26px;line-height:34px;color:#ccc;letter-spacing:0.783px;">storage</span>
<div class="b" style="left:184px;top:1272px;width:2px;height:132px;background:#585858;"></div>
</div></div>
<svg class="b" style="left:106px;top:157.5px;" width="20" height="11" viewBox="0 0 20 11"><path d="M1 1L10 10L19 1" fill="none" stroke="#ccc" stroke-width="2"/></svg>
<span class="t" style="left:136.0px;top:148px;font-size:22px;line-height:29px;color:#ccc;letter-spacing:-0.223px;font-weight:700;">LARAVEL</span>
<svg class="b" style="left:132px;top:201.3px;" width="20" height="11" viewBox="0 0 20 11"><path d="M1 1L10 10L19 1" fill="none" stroke="#c5c5c5" stroke-width="2"/></svg>
<span class="t" style="left:164.5px;top:190px;font-size:26px;line-height:34px;color:#ccc;letter-spacing:0.680px;">laravel-sisfo</span>
<svg class="b" style="left:148px;top:245.3px;" width="20" height="11" viewBox="0 0 20 11"><path d="M1 1L10 10L19 1" fill="none" stroke="#c5c5c5" stroke-width="2"/></svg>
<span class="t" style="left:180.5px;top:234px;font-size:26px;line-height:34px;color:#ccc;letter-spacing:0.660px;">app</span>
<svg class="b" style="left:164px;top:289.3px;" width="20" height="11" viewBox="0 0 20 11"><path d="M1 1L10 10L19 1" fill="none" stroke="#c5c5c5" stroke-width="2"/></svg>
<span class="t" style="left:196.5px;top:278px;font-size:26px;line-height:34px;color:#ccc;letter-spacing:1.553px;">Http</span>
<span class="t" style="left:254.5px;top:278px;font-size:26px;line-height:34px;color:#7a7a7a;letter-spacing:0.000px;">/</span>
<span class="t" style="left:266.0px;top:278px;font-size:26px;line-height:34px;color:#ccc;letter-spacing:0.616px;">Controllers</span>
<div class="b" style="left:96px;top:316px;width:340px;height:6px;background:linear-gradient(#000c,#0000)"></div>
<div class="b" style="left:96px;top:1668px;width:340px;height:2px;background:#2b2b2b;"></div>
<div class="b" style="left:96px;top:1712px;width:340px;height:2px;background:#2b2b2b;"></div>
<svg class="b" style="left:111.5px;top:1680.5px;" width="11" height="20" viewBox="0 0 11 20"><path d="M1 1L10 10L1 19" fill="none" stroke="#ccc" stroke-width="2"/></svg>
<span class="t" style="left:136.0px;top:1677px;font-size:22px;line-height:29px;color:#ccc;letter-spacing:0.570px;font-weight:700;">OUTLINE</span>
<svg class="b" style="left:111.5px;top:1724.5px;" width="11" height="20" viewBox="0 0 11 20"><path d="M1 1L10 10L1 19" fill="none" stroke="#ccc" stroke-width="2"/></svg>
<span class="t" style="left:136.0px;top:1721px;font-size:22px;line-height:29px;color:#ccc;letter-spacing:0.466px;font-weight:700;">TIMELINE</span>
<div class="b" style="left:438px;top:70px;width:2442px;height:1174px;background:#1f1f1f;"></div>
<div class="b" style="left:438px;top:70px;width:2442px;height:68px;background:#181818;"></div>
<div class="b" style="left:438px;top:138px;width:2442px;height:2px;background:#2b2b2b;"></div>
<div class="b" style="left:438px;top:70px;width:212px;height:68px;overflow:hidden"><div class="b" style="left:-438px;top:-70px;width:2880px;height:200px">
<span class="t" style="left:361.5px;top:89px;font-size:26px;line-height:34px;color:#9d9d9d;letter-spacing:0.577px;">UserController.php</span>
</div></div>
<div class="b" style="left:647px;top:70px;width:2px;height:68px;background:#2b2b2b;"></div>
<div class="b" style="left:887px;top:70px;width:2px;height:68px;background:#2b2b2b;"></div>
<svg class="b" style="left:677px;top:95px;" width="25" height="18" viewBox="0 0 25 18"><path fill="#a074c4" d="M0 6.500C0 2.500 3 0 7 0C9.500 0 11 0.500 12 1.500C12.800 1 13.500 0.700 14.500 0.700L18.500 0.700C21.500 0.900 23.300 3.500 23.900 6.300C24.500 6.800 24.900 7.500 25 8.400L23.900 7.900C23.600 9 22.600 10.500 21.800 11.500L21.600 17.200L17.200 17.200L17.200 12.800L12.200 12.800L12.200 17.200L8.600 17.200L8.400 12C7.500 11.600 6.500 11.600 5.800 12C5.600 13 5.900 14 6.300 15C6.600 16.400 5.600 17.300 4 17L3.600 16C4.600 15.800 4.600 15 4.100 14.200C3 12.800 2.200 11.500 2 10.200L0.900 10.200C0.300 9.200 0 8 0 6.500Z"/><path fill="none" stroke="#181818" stroke-width="1.100" d="M11.700 1C13.100 2.600 13 5.400 11.500 7C10.200 8.400 8 8.800 6.300 7.600"/><path fill="#181818" d="M1.900 9.300L3.600 9.100L3.300 10.300L2 10.300Z"/></svg>
<span class="t" style="left:713.0px;top:89px;font-size:26px;line-height:34px;color:#9d9d9d;letter-spacing:0.411px;font-style:italic;">User.php</span>
<div class="b" style="left:1183px;top:70px;width:2px;height:68px;background:#2b2b2b;"></div>
<svg class="b" style="left:917px;top:95px;" width="25" height="18" viewBox="0 0 25 18"><path fill="#a074c4" d="M0 6.500C0 2.500 3 0 7 0C9.500 0 11 0.500 12 1.500C12.800 1 13.500 0.700 14.500 0.700L18.500 0.700C21.500 0.900 23.300 3.500 23.900 6.300C24.500 6.800 24.900 7.500 25 8.400L23.900 7.900C23.600 9 22.600 10.500 21.800 11.500L21.600 17.200L17.200 17.200L17.200 12.800L12.200 12.800L12.200 17.200L8.600 17.200L8.400 12C7.500 11.600 6.500 11.600 5.800 12C5.600 13 5.900 14 6.300 15C6.600 16.400 5.600 17.300 4 17L3.600 16C4.600 15.800 4.600 15 4.100 14.200C3 12.800 2.200 11.500 2 10.200L0.900 10.200C0.300 9.200 0 8 0 6.500Z"/><path fill="none" stroke="#181818" stroke-width="1.100" d="M11.700 1C13.100 2.600 13 5.400 11.500 7C10.200 8.400 8 8.800 6.300 7.600"/><path fill="#181818" d="M1.900 9.300L3.600 9.100L3.300 10.300L2 10.300Z"/></svg>
<span class="t" style="left:953.0px;top:89px;font-size:26px;line-height:34px;color:#9d9d9d;letter-spacing:0.745px;">edit.blade.php</span>
<div class="b" style="left:1186px;top:70px;width:313px;height:70px;background:#1f1f1f;"></div>
<div class="b" style="left:1186px;top:70px;width:313px;height:2px;background:#3478cf;"></div>
<div class="b" style="left:1499px;top:70px;width:2px;height:68px;background:#2b2b2b;"></div>
<svg class="b" style="left:1213px;top:95px;" width="25" height="18" viewBox="0 0 25 18"><path fill="#a074c4" d="M0 6.500C0 2.500 3 0 7 0C9.500 0 11 0.500 12 1.500C12.800 1 13.500 0.700 14.500 0.700L18.500 0.700C21.500 0.900 23.300 3.500 23.900 6.300C24.500 6.800 24.900 7.500 25 8.400L23.900 7.900C23.600 9 22.600 10.500 21.800 11.500L21.600 17.200L17.200 17.200L17.200 12.800L12.200 12.800L12.200 17.200L8.600 17.200L8.400 12C7.500 11.600 6.500 11.600 5.800 12C5.600 13 5.900 14 6.300 15C6.600 16.400 5.600 17.300 4 17L3.600 16C4.600 15.800 4.600 15 4.100 14.200C3 12.800 2.200 11.500 2 10.200L0.900 10.200C0.300 9.200 0 8 0 6.500Z"/><path fill="none" stroke="#1f1f1f" stroke-width="1.100" d="M11.700 1C13.100 2.600 13 5.400 11.500 7C10.200 8.400 8 8.800 6.300 7.600"/><path fill="#1f1f1f" d="M1.900 9.300L3.600 9.100L3.300 10.300L2 10.300Z"/></svg>
<span class="t" style="left:1250.6px;top:89px;font-size:26px;line-height:34px;color:#fff;letter-spacing:0.529px;">index.blade.php</span>
<div class="b" style="left:1462px;top:96.500px;width:16px;height:16px;border-radius:8px;background:#fff"></div>
<div class="b" style="left:1826px;top:70px;width:2px;height:68px;background:#2b2b2b;"></div>
<svg class="b" style="left:1528px;top:95px;" width="25" height="18" viewBox="0 0 25 18"><path fill="#a074c4" d="M0 6.500C0 2.500 3 0 7 0C9.500 0 11 0.500 12 1.500C12.800 1 13.500 0.700 14.500 0.700L18.500 0.700C21.500 0.900 23.300 3.500 23.900 6.300C24.500 6.800 24.900 7.500 25 8.400L23.900 7.900C23.600 9 22.600 10.500 21.800 11.500L21.600 17.200L17.200 17.200L17.200 12.800L12.200 12.800L12.200 17.200L8.600 17.200L8.400 12C7.500 11.600 6.500 11.600 5.800 12C5.600 13 5.900 14 6.300 15C6.600 16.400 5.600 17.300 4 17L3.600 16C4.600 15.800 4.600 15 4.100 14.200C3 12.800 2.200 11.500 2 10.200L0.900 10.200C0.300 9.200 0 8 0 6.500Z"/><path fill="none" stroke="#181818" stroke-width="1.100" d="M11.700 1C13.100 2.600 13 5.400 11.500 7C10.200 8.400 8 8.800 6.300 7.600"/><path fill="#181818" d="M1.900 9.300L3.600 9.100L3.300 10.300L2 10.300Z"/></svg>
<span class="t" style="left:1565.0px;top:89px;font-size:26px;line-height:34px;color:#9d9d9d;letter-spacing:0.717px;">create.blade.php</span>
<div class="b" style="left:1790px;top:96.500px;width:16px;height:16px;border-radius:8px;background:#9d9d9d"></div>
<div class="b" style="left:2165px;top:70px;width:2px;height:68px;background:#2b2b2b;"></div>
<svg class="b" style="left:1856px;top:95px;" width="25" height="18" viewBox="0 0 25 18"><path fill="#a074c4" d="M0 6.500C0 2.500 3 0 7 0C9.500 0 11 0.500 12 1.500C12.800 1 13.500 0.700 14.500 0.700L18.500 0.700C21.500 0.900 23.300 3.500 23.900 6.300C24.500 6.800 24.900 7.500 25 8.400L23.900 7.900C23.600 9 22.600 10.500 21.800 11.500L21.600 17.200L17.200 17.200L17.200 12.800L12.200 12.800L12.200 17.200L8.600 17.200L8.400 12C7.500 11.600 6.500 11.600 5.800 12C5.600 13 5.900 14 6.300 15C6.600 16.400 5.600 17.300 4 17L3.600 16C4.600 15.800 4.600 15 4.100 14.200C3 12.800 2.200 11.500 2 10.200L0.900 10.200C0.300 9.200 0 8 0 6.500Z"/><path fill="none" stroke="#181818" stroke-width="1.100" d="M11.700 1C13.100 2.600 13 5.400 11.500 7C10.200 8.400 8 8.800 6.300 7.600"/><path fill="#181818" d="M1.900 9.300L3.600 9.100L3.300 10.300L2 10.300Z"/></svg>
<span class="t" style="left:1892.0px;top:89px;font-size:26px;line-height:34px;color:#9d9d9d;letter-spacing:0.610px;">sidebar.blade.php</span>
<div class="b" style="left:2494px;top:70px;width:2px;height:68px;background:#2b2b2b;"></div>
<svg class="b" style="left:2195px;top:95px;" width="25" height="18" viewBox="0 0 25 18"><path fill="#a074c4" d="M0 6.500C0 2.500 3 0 7 0C9.500 0 11 0.500 12 1.500C12.800 1 13.500 0.700 14.500 0.700L18.500 0.700C21.500 0.900 23.300 3.500 23.900 6.300C24.500 6.800 24.900 7.500 25 8.400L23.900 7.900C23.600 9 22.600 10.500 21.800 11.500L21.600 17.200L17.200 17.200L17.200 12.800L12.200 12.800L12.200 17.200L8.600 17.200L8.400 12C7.500 11.600 6.500 11.600 5.800 12C5.600 13 5.900 14 6.300 15C6.600 16.400 5.600 17.300 4 17L3.600 16C4.600 15.800 4.600 15 4.100 14.200C3 12.800 2.200 11.500 2 10.200L0.900 10.200C0.300 9.200 0 8 0 6.500Z"/><path fill="none" stroke="#181818" stroke-width="1.100" d="M11.700 1C13.100 2.600 13 5.400 11.500 7C10.200 8.400 8 8.800 6.300 7.600"/><path fill="#181818" d="M1.900 9.300L3.600 9.100L3.300 10.300L2 10.300Z"/></svg>
<span class="t" style="left:2231.5px;top:89px;font-size:26px;line-height:34px;color:#9d9d9d;letter-spacing:0.713px;">topbar.blade.php</span>
<div class="b" style="left:2496px;top:70px;width:206px;height:68px;overflow:hidden"><div class="b" style="left:-2496px;top:-70px;width:2880px;height:200px">
<svg class="b" style="left:2522px;top:95px;" width="25" height="18" viewBox="0 0 25 18"><path fill="#a074c4" d="M0 6.500C0 2.500 3 0 7 0C9.500 0 11 0.500 12 1.500C12.800 1 13.500 0.700 14.500 0.700L18.500 0.700C21.500 0.900 23.300 3.500 23.900 6.300C24.500 6.800 24.900 7.500 25 8.400L23.900 7.900C23.600 9 22.600 10.500 21.800 11.500L21.600 17.200L17.200 17.200L17.200 12.800L12.200 12.800L12.200 17.200L8.600 17.200L8.400 12C7.500 11.600 6.500 11.600 5.800 12C5.600 13 5.900 14 6.300 15C6.600 16.400 5.600 17.300 4 17L3.600 16C4.600 15.800 4.600 15 4.100 14.200C3 12.800 2.200 11.500 2 10.200L0.900 10.200C0.300 9.200 0 8 0 6.500Z"/><path fill="none" stroke="#181818" stroke-width="1.100" d="M11.700 1C13.100 2.600 13 5.400 11.500 7C10.200 8.400 8 8.800 6.300 7.600"/><path fill="#181818" d="M1.900 9.300L3.600 9.100L3.300 10.300L2 10.300Z"/></svg>
<span class="t" style="left:2560.0px;top:89px;font-size:26px;line-height:34px;color:#9d9d9d;letter-spacing:0.580px;">home.blade.php</span>
</div></div>
<svg class="b" style="left:2716px;top:91px;" width="28" height="30" viewBox="0 0 28 30"><path d="M4.800 3.200V26.800L23 15Z" fill="none" stroke="#ccc" stroke-width="2.200" stroke-linejoin="round"/></svg>
<svg class="b" style="left:2769px;top:90px;" width="28" height="28" viewBox="0 0 28 28"><rect x="2.100" y="2.100" width="23.600" height="23.800" rx="3" fill="none" stroke="#ccc" stroke-width="2.200"/><path d="M13.900 2.500V25.500" stroke="#ccc" stroke-width="2.200"/></svg>
<div class="b" style="left:2821.8px;top:102.900px;width:4.400px;height:4.400px;border-radius:2.200px;background:#ccc"></div>
<div class="b" style="left:2831.8px;top:102.900px;width:4.400px;height:4.400px;border-radius:2.200px;background:#ccc"></div>
<div class="b" style="left:2841.8px;top:102.900px;width:4.400px;height:4.400px;border-radius:2.200px;background:#ccc"></div>
<span class="t" style="left:470.0px;top:146px;font-size:26px;line-height:34px;color:#a9a9a9;letter-spacing:0.713px;">laravel-sisfo</span>
<svg class="b" style="left:629px;top:152px;" width="10" height="19" viewBox="0 0 11 20"><path d="M1 1L10 10L1 19" fill="none" stroke="#a9a9a9" stroke-width="2.2"/></svg>
<span class="t" style="left:650.0px;top:146px;font-size:26px;line-height:34px;color:#a9a9a9;letter-spacing:0.575px;">resources</span>
<svg class="b" style="left:781px;top:152px;" width="10" height="19" viewBox="0 0 11 20"><path d="M1 1L10 10L1 19" fill="none" stroke="#a9a9a9" stroke-width="2.2"/></svg>
<span class="t" style="left:802.0px;top:146px;font-size:26px;line-height:34px;color:#a9a9a9;letter-spacing:0.425px;">views</span>
<svg class="b" style="left:881px;top:152px;" width="10" height="19" viewBox="0 0 11 20"><path d="M1 1L10 10L1 19" fill="none" stroke="#a9a9a9" stroke-width="2.2"/></svg>
<span class="t" style="left:902.0px;top:146px;font-size:26px;line-height:34px;color:#a9a9a9;letter-spacing:0.433px;">user</span>
<svg class="b" style="left:967px;top:152px;" width="10" height="19" viewBox="0 0 11 20"><path d="M1 1L10 10L1 19" fill="none" stroke="#a9a9a9" stroke-width="2.2"/></svg>
<svg class="b" style="left:993.5px;top:152px;" width="25" height="18" viewBox="0 0 25 18"><path fill="#a074c4" d="M0 6.500C0 2.500 3 0 7 0C9.500 0 11 0.500 12 1.500C12.800 1 13.500 0.700 14.500 0.700L18.500 0.700C21.500 0.900 23.300 3.500 23.900 6.300C24.500 6.800 24.900 7.500 25 8.400L23.900 7.900C23.600 9 22.600 10.500 21.800 11.500L21.600 17.200L17.200 17.200L17.200 12.800L12.200 12.800L12.200 17.200L8.600 17.200L8.400 12C7.500 11.600 6.500 11.600 5.800 12C5.600 13 5.900 14 6.300 15C6.600 16.400 5.600 17.300 4 17L3.600 16C4.600 15.800 4.600 15 4.100 14.200C3 12.800 2.200 11.500 2 10.200L0.900 10.200C0.300 9.200 0 8 0 6.500Z"/><path fill="none" stroke="#1f1f1f" stroke-width="1.100" d="M11.700 1C13.100 2.600 13 5.400 11.500 7C10.200 8.400 8 8.800 6.300 7.600"/><path fill="#1f1f1f" d="M1.900 9.300L3.600 9.100L3.300 10.300L2 10.300Z"/></svg>
<span class="t" style="left:1030.7px;top:146px;font-size:26px;line-height:34px;color:#a9a9a9;letter-spacing:0.550px;">index.blade.php</span>
<div class="b" style="left:438px;top:184px;width:2442px;height:1060px;overflow:hidden"><div class="b" style="left:-438px;top:-184px;width:2880px;height:1800px">
<div class="ln" style="top:184px">1</div>
<div class="cl" style="left:569.5px;top:184px"><span style="color:#cccccc">@extends('layouts.main')</span></div>
<div class="ln" style="top:220px">2</div>
<div class="ln" style="top:256px">3</div>
<div class="cl" style="left:569.5px;top:256px"><span style="color:#cccccc">@section('judul')</span></div>
<div class="b" style="left:570px;top:292px;width:2px;height:36px;background:#3a3a3a;"></div>
<div class="ln" style="top:292px">4</div>
<div class="cl" style="left:569.5px;top:292px">    <span style="color:#cccccc">Users</span></div>
<div class="ln" style="top:328px">5</div>
<div class="cl" style="left:569.5px;top:328px"><span style="color:#cccccc">@endsection</span></div>
<div class="ln" style="top:364px">6</div>
<div class="ln" style="top:400px">7</div>
<div class="cl" style="left:569.5px;top:400px"><span style="color:#cccccc">@section('konten')</span></div>
<div class="b" style="left:570px;top:436px;width:2px;height:36px;background:#3a3a3a;"></div>
<div class="ln" style="top:436px">8</div>
<div class="cl" style="left:569.5px;top:436px">    <span style="color:#cccccc">@if(session('status'))</span></div>
<div class="b" style="left:570px;top:472px;width:2px;height:36px;background:#3a3a3a;"></div>
<div class="b" style="left:628px;top:472px;width:2px;height:36px;background:#3a3a3a;"></div>
<div class="ln" style="top:472px">9</div>
<div class="cl" style="left:569.5px;top:472px">        <span style="color:#808080">&lt;</span><span style="color:#569cd6">div</span> <span style="color:#9cdcfe">class</span><span style="color:#cccccc">=</span><span style="color:#ce9178">"alert alert-success"</span><span style="color:#808080">&gt;</span></div>
<div class="b" style="left:570px;top:508px;width:2px;height:36px;background:#3a3a3a;"></div>
<div class="b" style="left:628px;top:508px;width:2px;height:36px;background:#3a3a3a;"></div>
<div class="b" style="left:686px;top:508px;width:2px;height:36px;background:#3a3a3a;"></div>
<div class="ln" style="top:508px">10</div>
<div class="cl" style="left:569.5px;top:508px">            <span style="color:#cccccc">{{ session('status') }}</span></div>
<div class="b" style="left:570px;top:544px;width:2px;height:36px;background:#3a3a3a;"></div>
<div class="b" style="left:628px;top:544px;width:2px;height:36px;background:#3a3a3a;"></div>
<div class="ln" style="top:544px">11</div>
<div class="cl" style="left:569.5px;top:544px">        <span style="color:#808080">&lt;/</span><span style="color:#569cd6">div</span><span style="color:#808080">&gt;</span></div>
<div class="b" style="left:570px;top:580px;width:2px;height:36px;background:#3a3a3a;"></div>
<div class="ln" style="top:580px">12</div>
<div class="cl" style="left:569.5px;top:580px">    <span style="color:#cccccc">@endif</span></div>
<div class="b" style="left:570px;top:616px;width:2px;height:36px;background:#3a3a3a;"></div>
<div class="ln" style="top:616px">13</div>
<div class="b" style="left:570px;top:652px;width:2px;height:36px;background:#3a3a3a;"></div>
<div class="ln" style="top:652px">14</div>
<div class="cl" style="left:569.5px;top:652px">    <span style="color:#808080">&lt;</span><span style="color:#569cd6">div</span> <span style="color:#9cdcfe">class</span><span style="color:#cccccc">=</span><span style="color:#ce9178">"card shadow mb-4"</span><span style="color:#808080">&gt;</span></div>
<div class="b" style="left:570px;top:688px;width:2px;height:36px;background:#3a3a3a;"></div>
<div class="b" style="left:628px;top:688px;width:2px;height:36px;background:#3a3a3a;"></div>
<div class="ln" style="top:688px">15</div>
<div class="cl" style="left:569.5px;top:688px">        <span style="color:#808080">&lt;</span><span style="color:#569cd6">div</span> <span style="color:#9cdcfe">class</span><span style="color:#cccccc">=</span><span style="color:#ce9178">"card-header py-3"</span><span style="color:#808080">&gt;</span></div>
<div class="b" style="left:570px;top:724px;width:2px;height:36px;background:#3a3a3a;"></div>
<div class="b" style="left:628px;top:724px;width:2px;height:36px;background:#3a3a3a;"></div>
<div class="b" style="left:686px;top:724px;width:2px;height:36px;background:#3a3a3a;"></div>
<div class="ln" style="top:724px">16</div>
<div class="cl" style="left:569.5px;top:724px">            <span style="color:#6a9955">&lt;!-- Optional header content --&gt;</span></div>
<div class="b" style="left:570px;top:760px;width:2px;height:36px;background:#3a3a3a;"></div>
<div class="b" style="left:628px;top:760px;width:2px;height:36px;background:#3a3a3a;"></div>
<div class="ln" style="top:760px">17</div>
<div class="cl" style="left:569.5px;top:760px">        <span style="color:#808080">&lt;/</span><span style="color:#569cd6">div</span><span style="color:#808080">&gt;</span></div>
<div class="b" style="left:570px;top:796px;width:2px;height:36px;background:#3a3a3a;"></div>
<div class="b" style="left:628px;top:796px;width:2px;height:36px;background:#3a3a3a;"></div>
<div class="ln" style="top:796px">18</div>
<div class="cl" style="left:569.5px;top:796px">        <span style="color:#808080">&lt;</span><span style="color:#569cd6">div</span> <span style="color:#9cdcfe">class</span><span style="color:#cccccc">=</span><span style="color:#ce9178">"card-body"</span><span style="color:#808080">&gt;</span></div>
<div class="b" style="left:570px;top:832px;width:2px;height:36px;background:#3a3a3a;"></div>
<div class="b" style="left:628px;top:832px;width:2px;height:36px;background:#3a3a3a;"></div>
<div class="b" style="left:686px;top:832px;width:2px;height:36px;background:#3a3a3a;"></div>
<div class="ln" style="top:832px">19</div>
<div class="cl" style="left:569.5px;top:832px">            <span style="color:#808080">&lt;</span><span style="color:#569cd6">div</span> <span style="color:#9cdcfe">class</span><span style="color:#cccccc">=</span><span style="color:#ce9178">"table-responsive"</span><span style="color:#808080">&gt;</span></div>
<div class="b" style="left:570px;top:868px;width:2px;height:36px;background:#3a3a3a;"></div>
<div class="b" style="left:628px;top:868px;width:2px;height:36px;background:#3a3a3a;"></div>
<div class="b" style="left:686px;top:868px;width:2px;height:36px;background:#3a3a3a;"></div>
<div class="b" style="left:743px;top:868px;width:2px;height:36px;background:#3a3a3a;"></div>
<div class="ln" style="top:868px">20</div>
<div class="cl" style="left:569.5px;top:868px">                <span style="color:#808080">&lt;</span><span style="color:#569cd6">table</span> <span style="color:#9cdcfe">class</span><span style="color:#cccccc">=</span><span style="color:#ce9178">"table table-bordered"</span> <span style="color:#9cdcfe">id</span><span style="color:#cccccc">=</span><span style="color:#ce9178">"dataTable"</span> <span style="color:#9cdcfe">width</span><span style="color:#cccccc">=</span><span style="color:#ce9178">"100%"</span> <span style="color:#9cdcfe">cellspacing</span><span style="color:#cccccc">=</span><span style="color:#ce9178">"0"</span><span style="color:#808080">&gt;</span></div>
<div class="b" style="left:570px;top:904px;width:2px;height:36px;background:#3a3a3a;"></div>
<div class="b" style="left:628px;top:904px;width:2px;height:36px;background:#3a3a3a;"></div>
<div class="b" style="left:686px;top:904px;width:2px;height:36px;background:#3a3a3a;"></div>
<div class="b" style="left:743px;top:904px;width:2px;height:36px;background:#3a3a3a;"></div>
<div class="b" style="left:801px;top:904px;width:2px;height:36px;background:#3a3a3a;"></div>
<div class="ln" style="top:904px">21</div>
<div class="cl" style="left:569.5px;top:904px">                    <span style="color:#808080">&lt;</span><span style="color:#569cd6">thead</span><span style="color:#808080">&gt;</span></div>
<div class="b" style="left:570px;top:940px;width:2px;height:36px;background:#3a3a3a;"></div>
<div class="b" style="left:628px;top:940px;width:2px;height:36px;background:#3a3a3a;"></div>
<div class="b" style="left:686px;top:940px;width:2px;height:36px;background:#3a3a3a;"></div>
<div class="b" style="left:743px;top:940px;width:2px;height:36px;background:#3a3a3a;"></div>
<div class="b" style="left:801px;top:940px;width:2px;height:36px;background:#3a3a3a;"></div>
<div class="b" style="left:859px;top:940px;width:2px;height:36px;background:#3a3a3a;"></div>
<div class="ln" style="top:940px">22</div>
<div class="cl" style="left:569.5px;top:940px">                        <span style="color:#808080">&lt;</span><span style="color:#569cd6">tr</span><span style="color:#808080">&gt;</span></div>
<div class="b" style="left:570px;top:976px;width:2px;height:36px;background:#3a3a3a;"></div>
<div class="b" style="left:628px;top:976px;width:2px;height:36px;background:#3a3a3a;"></div>
<div class="b" style="left:686px;top:976px;width:2px;height:36px;background:#3a3a3a;"></div>
<div class="b" style="left:743px;top:976px;width:2px;height:36px;background:#3a3a3a;"></div>
<div class="b" style="left:801px;top:976px;width:2px;height:36px;background:#3a3a3a;"></div>
<div class="b" style="left:859px;top:976px;width:2px;height:36px;background:#3a3a3a;"></div>
<div class="b" style="left:917px;top:976px;width:2px;height:36px;background:#3a3a3a;"></div>
<div class="ln" style="top:976px">23</div>
<div class="cl" style="left:569.5px;top:976px">                            <span style="color:#808080">&lt;</span><span style="color:#569cd6">th</span><span style="color:#808080">&gt;</span><span style="color:#808080">&lt;</span><span style="color:#569cd6">b</span><span style="color:#808080">&gt;</span><span style="color:#cccccc">Name</span><span style="color:#808080">&lt;/</span><span style="color:#569cd6">b</span><span style="color:#808080">&gt;</span><span style="color:#808080">&lt;/</span><span style="color:#569cd6">th</span><span style="color:#808080">&gt;</span></div>
<div class="b" style="left:570px;top:1012px;width:2px;height:36px;background:#3a3a3a;"></div>
<div class="b" style="left:628px;top:1012px;width:2px;height:36px;background:#3a3a3a;"></div>
<div class="b" style="left:686px;top:1012px;width:2px;height:36px;background:#3a3a3a;"></div>
<div class="b" style="left:743px;top:1012px;width:2px;height:36px;background:#3a3a3a;"></div>
<div class="b" style="left:801px;top:1012px;width:2px;height:36px;background:#3a3a3a;"></div>
<div class="b" style="left:859px;top:1012px;width:2px;height:36px;background:#3a3a3a;"></div>
<div class="b" style="left:917px;top:1012px;width:2px;height:36px;background:#3a3a3a;"></div>
<div class="ln" style="top:1012px">24</div>
<div class="cl" style="left:569.5px;top:1012px">                            <span style="color:#808080">&lt;</span><span style="color:#569cd6">th</span><span style="color:#808080">&gt;</span><span style="color:#808080">&lt;</span><span style="color:#569cd6">b</span><span style="color:#808080">&gt;</span><span style="color:#cccccc">Username</span><span style="color:#808080">&lt;/</span><span style="color:#569cd6">b</span><span style="color:#808080">&gt;</span><span style="color:#808080">&lt;/</span><span style="color:#569cd6">th</span><span style="color:#808080">&gt;</span></div>
<div class="b" style="left:570px;top:1048px;width:2px;height:36px;background:#3a3a3a;"></div>
<div class="b" style="left:628px;top:1048px;width:2px;height:36px;background:#3a3a3a;"></div>
<div class="b" style="left:686px;top:1048px;width:2px;height:36px;background:#3a3a3a;"></div>
<div class="b" style="left:743px;top:1048px;width:2px;height:36px;background:#3a3a3a;"></div>
<div class="b" style="left:801px;top:1048px;width:2px;height:36px;background:#3a3a3a;"></div>
<div class="b" style="left:859px;top:1048px;width:2px;height:36px;background:#3a3a3a;"></div>
<div class="b" style="left:917px;top:1048px;width:2px;height:36px;background:#3a3a3a;"></div>
<div class="ln" style="top:1048px">25</div>
<div class="cl" style="left:569.5px;top:1048px">                            <span style="color:#808080">&lt;</span><span style="color:#569cd6">th</span><span style="color:#808080">&gt;</span><span style="color:#808080">&lt;</span><span style="color:#569cd6">b</span><span style="color:#808080">&gt;</span><span style="color:#cccccc">Email</span><span style="color:#808080">&lt;/</span><span style="color:#569cd6">b</span><span style="color:#808080">&gt;</span><span style="color:#808080">&lt;/</span><span style="color:#569cd6">th</span><span style="color:#808080">&gt;</span></div>
<div class="b" style="left:570px;top:1084px;width:2px;height:36px;background:#3a3a3a;"></div>
<div class="b" style="left:628px;top:1084px;width:2px;height:36px;background:#3a3a3a;"></div>
<div class="b" style="left:686px;top:1084px;width:2px;height:36px;background:#3a3a3a;"></div>
<div class="b" style="left:743px;top:1084px;width:2px;height:36px;background:#3a3a3a;"></div>
<div class="b" style="left:801px;top:1084px;width:2px;height:36px;background:#3a3a3a;"></div>
<div class="b" style="left:859px;top:1084px;width:2px;height:36px;background:#3a3a3a;"></div>
<div class="b" style="left:917px;top:1084px;width:2px;height:36px;background:#3a3a3a;"></div>
<div class="ln" style="top:1084px">26</div>
<div class="cl" style="left:569.5px;top:1084px">                            <span style="color:#808080">&lt;</span><span style="color:#569cd6">th</span><span style="color:#808080">&gt;</span><span style="color:#808080">&lt;</span><span style="color:#569cd6">b</span><span style="color:#808080">&gt;</span><span style="color:#cccccc">Action</span><span style="color:#808080">&lt;/</span><span style="color:#569cd6">b</span><span style="color:#808080">&gt;</span><span style="color:#808080">&lt;/</span><span style="color:#569cd6">th</span><span style="color:#808080">&gt;</span></div>
<div class="b" style="left:570px;top:1120px;width:2px;height:36px;background:#3a3a3a;"></div>
<div class="b" style="left:628px;top:1120px;width:2px;height:36px;background:#3a3a3a;"></div>
<div class="b" style="left:686px;top:1120px;width:2px;height:36px;background:#3a3a3a;"></div>
<div class="b" style="left:743px;top:1120px;width:2px;height:36px;background:#3a3a3a;"></div>
<div class="b" style="left:801px;top:1120px;width:2px;height:36px;background:#3a3a3a;"></div>
<div class="b" style="left:859px;top:1120px;width:2px;height:36px;background:#3a3a3a;"></div>
<div class="ln" style="top:1120px">27</div>
<div class="cl" style="left:569.5px;top:1120px">                        <span style="color:#808080">&lt;/</span><span style="color:#569cd6">tr</span><span style="color:#808080">&gt;</span></div>
<div class="b" style="left:570px;top:1156px;width:2px;height:36px;background:#3a3a3a;"></div>
<div class="b" style="left:628px;top:1156px;width:2px;height:36px;background:#3a3a3a;"></div>
<div class="b" style="left:686px;top:1156px;width:2px;height:36px;background:#3a3a3a;"></div>
<div class="b" style="left:743px;top:1156px;width:2px;height:36px;background:#3a3a3a;"></div>
<div class="b" style="left:801px;top:1156px;width:2px;height:36px;background:#3a3a3a;"></div>
<div class="ln" style="top:1156px">28</div>
<div class="cl" style="left:569.5px;top:1156px">                    <span style="color:#808080">&lt;/</span><span style="color:#569cd6">thead</span><span style="color:#808080">&gt;</span></div>
<div class="b" style="left:570px;top:1192px;width:2px;height:36px;background:#3a3a3a;"></div>
<div class="b" style="left:628px;top:1192px;width:2px;height:36px;background:#3a3a3a;"></div>
<div class="b" style="left:686px;top:1192px;width:2px;height:36px;background:#3a3a3a;"></div>
<div class="b" style="left:743px;top:1192px;width:2px;height:36px;background:#3a3a3a;"></div>
<div class="b" style="left:801px;top:1192px;width:2px;height:36px;background:#3a3a3a;"></div>
<div class="ln" style="top:1192px">29</div>
<div class="cl" style="left:569.5px;top:1192px">                    <span style="color:#808080">&lt;</span><span style="color:#569cd6">tbody</span><span style="color:#808080">&gt;</span></div>
<div class="b" style="left:570px;top:1228px;width:2px;height:36px;background:#3a3a3a;"></div>
<div class="b" style="left:628px;top:1228px;width:2px;height:36px;background:#3a3a3a;"></div>
<div class="b" style="left:686px;top:1228px;width:2px;height:36px;background:#3a3a3a;"></div>
<div class="b" style="left:743px;top:1228px;width:2px;height:36px;background:#3a3a3a;"></div>
<div class="b" style="left:801px;top:1228px;width:2px;height:36px;background:#3a3a3a;"></div>
<div class="b" style="left:859px;top:1228px;width:2px;height:36px;background:#3a3a3a;"></div>
<div class="ln" style="top:1228px">30</div>
<div class="cl" style="left:569.5px;top:1228px">                        <span style="color:#cccccc">@foreach($users as $user)</span></div>
</div></div>
<div class="mm">
<div><span style="color:#cccccc">@extends('layouts.main')</span></div>
<div>&nbsp;</div>
<div><span style="color:#cccccc">@section('judul')</span></div>
<div>    <span style="color:#cccccc">Users</span></div>
<div><span style="color:#cccccc">@endsection</span></div>
<div>&nbsp;</div>
<div><span style="color:#cccccc">@section('konten')</span></div>
<div>    <span style="color:#cccccc">@if(session('status'))</span></div>
<div>        <span style="color:#808080">&lt;</span><span style="color:#569cd6">div</span> <span style="color:#9cdcfe">class</span><span style="color:#cccccc">=</span><span style="color:#ce9178">"alert alert-success"</span><span style="color:#808080">&gt;</span></div>
<div>            <span style="color:#cccccc">{{ session('status') }}</span></div>
<div>        <span style="color:#808080">&lt;/</span><span style="color:#569cd6">div</span><span style="color:#808080">&gt;</span></div>
<div>    <span style="color:#cccccc">@endif</span></div>
<div>&nbsp;</div>
<div>    <span style="color:#808080">&lt;</span><span style="color:#569cd6">div</span> <span style="color:#9cdcfe">class</span><span style="color:#cccccc">=</span><span style="color:#ce9178">"card shadow mb-4"</span><span style="color:#808080">&gt;</span></div>
<div>        <span style="color:#808080">&lt;</span><span style="color:#569cd6">div</span> <span style="color:#9cdcfe">class</span><span style="color:#cccccc">=</span><span style="color:#ce9178">"card-header py-3"</span><span style="color:#808080">&gt;</span></div>
<div>            <span style="color:#6a9955">&lt;!-- Optional header content --&gt;</span></div>
<div>        <span style="color:#808080">&lt;/</span><span style="color:#569cd6">div</span><span style="color:#808080">&gt;</span></div>
<div>        <span style="color:#808080">&lt;</span><span style="color:#569cd6">div</span> <span style="color:#9cdcfe">class</span><span style="color:#cccccc">=</span><span style="color:#ce9178">"card-body"</span><span style="color:#808080">&gt;</span></div>
<div>            <span style="color:#808080">&lt;</span><span style="color:#569cd6">div</span> <span style="color:#9cdcfe">class</span><span style="color:#cccccc">=</span><span style="color:#ce9178">"table-responsive"</span><span style="color:#808080">&gt;</span></div>
<div>                <span style="color:#808080">&lt;</span><span style="color:#569cd6">table</span> <span style="color:#9cdcfe">class</span><span style="color:#cccccc">=</span><span style="color:#ce9178">"table table-bordered"</span> <span style="color:#9cdcfe">id</span><span style="color:#cccccc">=</span><span style="color:#ce9178">"dataTable"</span> <span style="color:#9cdcfe">width</span><span style="color:#cccccc">=</span><span style="color:#ce9178">"100%"</span> <span style="color:#9cdcfe">cellspacing</span><span style="color:#cccccc">=</span><span style="color:#ce9178">"0"</span><span style="color:#808080">&gt;</span></div>
<div>                    <span style="color:#808080">&lt;</span><span style="color:#569cd6">thead</span><span style="color:#808080">&gt;</span></div>
<div>                        <span style="color:#808080">&lt;</span><span style="color:#569cd6">tr</span><span style="color:#808080">&gt;</span></div>
<div>                            <span style="color:#808080">&lt;</span><span style="color:#569cd6">th</span><span style="color:#808080">&gt;</span><span style="color:#808080">&lt;</span><span style="color:#569cd6">b</span><span style="color:#808080">&gt;</span><span style="color:#cccccc">Name</span><span style="color:#808080">&lt;/</span><span style="color:#569cd6">b</span><span style="color:#808080">&gt;</span><span style="color:#808080">&lt;/</span><span style="color:#569cd6">th</span><span style="color:#808080">&gt;</span></div>
<div>                            <span style="color:#808080">&lt;</span><span style="color:#569cd6">th</span><span style="color:#808080">&gt;</span><span style="color:#808080">&lt;</span><span style="color:#569cd6">b</span><span style="color:#808080">&gt;</span><span style="color:#cccccc">Username</span><span style="color:#808080">&lt;/</span><span style="color:#569cd6">b</span><span style="color:#808080">&gt;</span><span style="color:#808080">&lt;/</span><span style="color:#569cd6">th</span><span style="color:#808080">&gt;</span></div>
<div>                            <span style="color:#808080">&lt;</span><span style="color:#569cd6">th</span><span style="color:#808080">&gt;</span><span style="color:#808080">&lt;</span><span style="color:#569cd6">b</span><span style="color:#808080">&gt;</span><span style="color:#cccccc">Email</span><span style="color:#808080">&lt;/</span><span style="color:#569cd6">b</span><span style="color:#808080">&gt;</span><span style="color:#808080">&lt;/</span><span style="color:#569cd6">th</span><span style="color:#808080">&gt;</span></div>
<div>                            <span style="color:#808080">&lt;</span><span style="color:#569cd6">th</span><span style="color:#808080">&gt;</span><span style="color:#808080">&lt;</span><span style="color:#569cd6">b</span><span style="color:#808080">&gt;</span><span style="color:#cccccc">Action</span><span style="color:#808080">&lt;/</span><span style="color:#569cd6">b</span><span style="color:#808080">&gt;</span><span style="color:#808080">&lt;/</span><span style="color:#569cd6">th</span><span style="color:#808080">&gt;</span></div>
<div>                        <span style="color:#808080">&lt;/</span><span style="color:#569cd6">tr</span><span style="color:#808080">&gt;</span></div>
<div>                    <span style="color:#808080">&lt;/</span><span style="color:#569cd6">thead</span><span style="color:#808080">&gt;</span></div>
<div>                    <span style="color:#808080">&lt;</span><span style="color:#569cd6">tbody</span><span style="color:#808080">&gt;</span></div>
<div>                        <span style="color:#cccccc">@foreach($users as $user)</span></div>
<div>                            <span style="color:#808080">&lt;</span><span style="color:#569cd6">tr</span><span style="color:#808080">&gt;</span></div>
<div>                                <span style="color:#808080">&lt;</span><span style="color:#569cd6">td</span><span style="color:#808080">&gt;</span><span style="color:#cccccc">{{ $user-&gt;name }}</span><span style="color:#808080">&lt;/</span><span style="color:#569cd6">td</span><span style="color:#808080">&gt;</span></div>
<div>                                <span style="color:#808080">&lt;</span><span style="color:#569cd6">td</span><span style="color:#808080">&gt;</span><span style="color:#cccccc">{{ $user-&gt;username }}</span><span style="color:#808080">&lt;/</span><span style="color:#569cd6">td</span><span style="color:#808080">&gt;</span></div>
<div>                                <span style="color:#808080">&lt;</span><span style="color:#569cd6">td</span><span style="color:#808080">&gt;</span><span style="color:#cccccc">{{ $user-&gt;email }}</span><span style="color:#808080">&lt;/</span><span style="color:#569cd6">td</span><span style="color:#808080">&gt;</span></div>
<div>                                <span style="color:#808080">&lt;</span><span style="color:#569cd6">td</span><span style="color:#808080">&gt;</span></div>
<div>                                    <span style="color:#808080">&lt;</span><span style="color:#569cd6">a</span> <span style="color:#9cdcfe">href</span><span style="color:#cccccc">=</span><span style="color:#ce9178">"{{ route('users.edit', $user-&gt;id) }}"</span> <span style="color:#9cdcfe">class</span><span style="color:#cccccc">=</span><span style="color:#ce9178">"btn btn-sm btn-success"</span><span style="color:#808080">&gt;</span><span style="color:#cccccc">Edit</span><span style="color:#808080">&lt;/</span><span style="color:#569cd6">a</span><span style="color:#808080">&gt;</span></div>
<div>                                    <span style="color:#808080">&lt;</span><span style="color:#569cd6">form</span></div>
<div>                                        <span style="color:#9cdcfe">onsubmit</span><span style="color:#cccccc">=</span><span style="color:#ce9178">"</span><span style="color:#c586c0">return</span> <span style="color:#dcdcaa">confirm</span><span style="color:#cccccc">(</span><span style="color:#ce9178">'Hapus data user ?'</span><span style="color:#cccccc">)</span><span style="color:#ce9178">"</span></div>
<div>                                        <span style="color:#9cdcfe">class</span><span style="color:#cccccc">=</span><span style="color:#ce9178">"d-inline"</span></div>
<div>                                        <span style="color:#9cdcfe">action</span><span style="color:#cccccc">=</span><span style="color:#ce9178">"{{ route('users.destroy', [$user-&gt;id]) }}"</span></div>
<div>                                        <span style="color:#9cdcfe">method</span><span style="color:#cccccc">=</span><span style="color:#ce9178">"POST"</span><span style="color:#808080">&gt;</span></div>
<div>                                        <span style="color:#cccccc">@csrf</span></div>
<div>                                        <span style="color:#cccccc">@method('DELETE')</span></div>
<div>                                        <span style="color:#808080">&lt;</span><span style="color:#569cd6">input</span> <span style="color:#9cdcfe">type</span><span style="color:#cccccc">=</span><span style="color:#ce9178">"submit"</span> <span style="color:#9cdcfe">value</span><span style="color:#cccccc">=</span><span style="color:#ce9178">"Hapus"</span> <span style="color:#9cdcfe">class</span><span style="color:#cccccc">=</span><span style="color:#ce9178">"btn btn-danger btn-sm"</span><span style="color:#808080">&gt;</span></div>
<div>                                    <span style="color:#808080">&lt;/</span><span style="color:#569cd6">form</span><span style="color:#808080">&gt;</span></div>
<div>                                <span style="color:#808080">&lt;/</span><span style="color:#569cd6">td</span><span style="color:#808080">&gt;</span></div>
<div>                            <span style="color:#808080">&lt;/</span><span style="color:#569cd6">tr</span><span style="color:#808080">&gt;</span></div>
<div>                        <span style="color:#cccccc">@endforeach</span></div>
<div>                    <span style="color:#808080">&lt;/</span><span style="color:#569cd6">tbody</span><span style="color:#808080">&gt;</span></div>
<div>                <span style="color:#808080">&lt;/</span><span style="color:#569cd6">table</span><span style="color:#808080">&gt;</span></div>
<div>            <span style="color:#808080">&lt;/</span><span style="color:#569cd6">div</span><span style="color:#808080">&gt;</span></div>
<div>&nbsp;</div>
<div>            <span style="color:#808080">&lt;</span><span style="color:#569cd6">p</span><span style="color:#808080">&gt;</span></div>
<div>                <span style="color:#808080">&lt;</span><span style="color:#569cd6">a</span> <span style="color:#9cdcfe">href</span><span style="color:#cccccc">=</span><span style="color:#ce9178">"{{ route('users.create') }}"</span> <span style="color:#9cdcfe">class</span><span style="color:#cccccc">=</span><span style="color:#ce9178">"btn btn-primary btn-sm"</span><span style="color:#808080">&gt;</span><span style="color:#cccccc">Tambah User</span><span style="color:#808080">&lt;/</span><span style="color:#569cd6">a</span><span style="color:#808080">&gt;</span></div>
<div>            <span style="color:#808080">&lt;/</span><span style="color:#569cd6">p</span><span style="color:#808080">&gt;</span></div>
<div>        <span style="color:#808080">&lt;/</span><span style="color:#569cd6">div</span><span style="color:#808080">&gt;</span></div>
<div>    <span style="color:#808080">&lt;/</span><span style="color:#569cd6">div</span><span style="color:#808080">&gt;</span></div>
<div><span style="color:#cccccc">@endsection</span></div>
<div>&nbsp;</div>
</div>
<div class="b" style="left:2852px;top:184px;width:1px;height:1060px;background:#121212;"></div>
<div class="b" style="left:2852px;top:184px;width:28px;height:356px;background:#434343;"></div>
<div class="b" style="left:2853px;top:885px;width:27px;height:4px;background:#8e8e8e;"></div>
<div class="b" style="left:438px;top:1244px;width:2442px;height:2px;background:#2b2b2b;"></div>
<div class="b" style="left:438px;top:1246px;width:2442px;height:510px;background:#181818;"></div>
<span class="t" style="left:478.0px;top:1267px;font-size:22px;line-height:29px;color:#9d9d9d;letter-spacing:-0.506px;">PROBLEMS</span>
<span class="t" style="left:646.0px;top:1267px;font-size:22px;line-height:29px;color:#9d9d9d;letter-spacing:0.116px;">OUTPUT</span>
<span class="t" style="left:786.0px;top:1267px;font-size:22px;line-height:29px;color:#9d9d9d;letter-spacing:-0.273px;">DEBUG CONSOLE</span>
<span class="t" style="left:1024.5px;top:1267px;font-size:22px;line-height:29px;color:#e7e7e7;letter-spacing:-0.189px;">TERMINAL</span>
<div class="b" style="left:1019px;top:1302px;width:120px;height:2px;background:#3478cf;"></div>
<span class="t" style="left:1183.0px;top:1267px;font-size:22px;line-height:29px;color:#9d9d9d;letter-spacing:-0.825px;">PORTS</span>
<svg class="b" style="left:2281px;top:1264px;" width="32" height="34" viewBox="0 0 32 34"><path d="M13.600 2.900Q15.100 2.100 16.600 2.900L27 8.700Q28.200 9.400 28.200 10.800V22.800Q28.200 24.200 27 24.900L16.300 31.100Q14.800 32 13.300 31.100L3.300 25.300Q2.100 24.600 2.100 23.200V10.900Q2.100 9.500 3.300 8.800Z" fill="none" stroke="#ccc" stroke-width="1.700" stroke-linejoin="round"/><path d="M14.800 16.600L28 9.500V24.200L14.800 31.900Z" fill="#ccc"/><text transform="translate(16.600,28.300) skewY(-29)" font-family="Liberation Mono, monospace" font-size="9" font-weight="700" fill="#181818">$_</text></svg>
<span class="t" style="left:2321.0px;top:1265px;font-size:24px;line-height:31px;color:#ccc;letter-spacing:0.009px;">php - laravel-sisfo</span>
<svg class="b" style="left:2533px;top:1267px;" width="28" height="28" viewBox="0 0 28 28"><path d="M14 1V27M1 14H27" stroke="#ccc" stroke-width="2.400" fill="none"/></svg>
<svg class="b" style="left:2572.8px;top:1277.5px;" width="14.8" height="8.6" viewBox="0 0 20 11"><path d="M1 1L10 10L19 1" fill="none" stroke="#ccc" stroke-width="2.9"/></svg>
<svg class="b" style="left:2613px;top:1266.5px;" width="28" height="27" viewBox="0 0 30 30"><rect x="1.5" y="2.5" width="27" height="25" rx="3" fill="none" stroke="#ccc" stroke-width="2.4"/><path d="M15 3V27" stroke="#ccc" stroke-width="2.4"/></svg>
<svg class="b" style="left:2666px;top:1266px;" width="22" height="28" viewBox="0 0 22 28"><path d="M0.500 6.500H21.500M7 6V2.500H15V6M3.500 7V24.500Q3.500 26.500 5.500 26.500H16.500Q18.500 26.500 18.500 24.500V7M8 10.500V22.500M11 10.500V22.500M14 10.500V22.500" fill="none" stroke="#ccc" stroke-width="2"/></svg>
<div class="b" style="left:2717.8px;top:1279.100px;width:4.400px;height:4.400px;border-radius:2.200px;background:#ccc"></div>
<div class="b" style="left:2727.8px;top:1279.100px;width:4.400px;height:4.400px;border-radius:2.200px;background:#ccc"></div>
<div class="b" style="left:2737.8px;top:1279.100px;width:4.400px;height:4.400px;border-radius:2.200px;background:#ccc"></div>
<svg class="b" style="left:2771px;top:1273px;" width="22" height="13" viewBox="0 0 22 13"><path d="M1.800 11.500L11 2.300L20.200 11.500" fill="none" stroke="#ccc" stroke-width="2.200"/></svg>
<svg class="b" style="left:2824px;top:1271px;" width="20" height="20" viewBox="0 0 20 20"><path d="M2.200 1.800L17.800 17.400M17.800 1.800L2.200 17.400" fill="none" stroke="#ccc" stroke-width="2.200"/></svg>
<div class="tm" style="top:1332px"><span style="color:#8b8b8b">2025-06-12</span> <span style="color:#cccccc">08:42:11 /users/7</span><span style="color:#8b8b8b"> ........................................ ~ 0.18ms</span></div>
<div class="tm" style="top:1360px"><span style="color:#8b8b8b">2025-06-12</span> <span style="color:#cccccc">08:42:11 /users</span><span style="color:#8b8b8b"> .......................................... ~ 0.04ms</span></div>
<div class="tm" style="top:1388px"><span style="color:#8b8b8b">2025-06-12</span> <span style="color:#cccccc">08:42:11 /sbadmin/vendor/fontawesome-free/css/all.min.css</span><span style="color:#8b8b8b">  ~ 0.05ms</span></div>
<div class="tm" style="top:1416px"><span style="color:#8b8b8b">2025-06-12</span> <span style="color:#cccccc">08:42:11 /sbadmin/css/sb-admin-2.min.css</span><span style="color:#8b8b8b"> ................. ~ 0.12ms</span></div>
<div class="tm" style="top:1444px"><span style="color:#8b8b8b">2025-06-12</span> <span style="color:#cccccc">08:42:11 /sbadmin/vendor/datatables/dataTables.bootstrap4.min.css</span><span style="color:#8b8b8b">  ~ 0.09ms</span></div>
<div class="tm" style="top:1472px"><span style="color:#8b8b8b">2025-06-12</span> <span style="color:#cccccc">08:42:11 /sbadmin/vendor/datatables/jquery.dataTables.min.js</span><span style="color:#8b8b8b">  ~ 0.16ms</span></div>
<div class="tm" style="top:1500px"><span style="color:#8b8b8b">2025-06-12</span> <span style="color:#cccccc">08:42:11 /sbadmin/vendor/datatables/dataTables.bootstrap4.min.js</span><span style="color:#8b8b8b">  ~ 0.31ms</span></div>
<div class="tm" style="top:1528px"><span style="color:#8b8b8b">2025-06-12</span> <span style="color:#cccccc">08:42:11 /sbadmin/js/demo/datatables-demo.js</span><span style="color:#8b8b8b"> ............. ~ 0.49ms</span></div>
<div class="tm" style="top:1556px"><span style="color:#8b8b8b">2025-06-12</span> <span style="color:#cccccc">08:42:11 /sbadmin/vendor/jquery/jquery.min.js</span><span style="color:#8b8b8b"> ............ ~ 0.91ms</span></div>
<div class="tm" style="top:1584px"><span style="color:#8b8b8b">2025-06-12</span> <span style="color:#cccccc">08:42:11 /sbadmin/vendor/bootstrap/js/bootstrap.bundle.min.js</span><span style="color:#8b8b8b">  ~ 1.13ms</span></div>
<div class="tm" style="top:1612px"><span style="color:#8b8b8b">2025-06-12</span> <span style="color:#cccccc">08:42:11 /sbadmin/js/sb-admin-2.min.js</span><span style="color:#8b8b8b"> ................... ~ 0.04ms</span></div>
<div class="tm" style="top:1640px"><span style="color:#8b8b8b">2025-06-12</span> <span style="color:#cccccc">08:42:11 /sbadmin/img/undraw_profile.svg</span><span style="color:#8b8b8b"> ................. ~ 0.04ms</span></div>
<div class="tm" style="top:1668px"><span style="color:#8b8b8b">2025-06-12</span> <span style="color:#cccccc">08:42:11 /sbadmin/vendor/fontawesome-free/webfonts/fa-solid-900.woff2</span><span style="color:#8b8b8b">  ~ 0.07ms</span></div>
<div class="tm" style="top:1696px"><span style="color:#8b8b8b">2025-06-12</span> <span style="color:#cccccc">08:42:11 /sbadmin/vendor/fontawesome-free/webfonts/fa-regular-400.woff2</span><span style="color:#8b8b8b">  ~ 0.04ms</span></div>
<div class="b" style="left:478px;top:1723px;width:14px;height:28px;box-sizing:border-box;border:2px solid #ccc"></div>
<div class="b" style="left:2859px;top:1332px;width:7px;height:34px;background:#3a7ba6;"></div>
<div class="b" style="left:2859px;top:1374px;width:7px;height:12px;background:#3a7ba6;"></div>
<div class="b" style="left:2859px;top:1508px;width:7px;height:12px;background:#3a7ba6;"></div>
<div class="b" style="left:2859px;top:1542px;width:7px;height:33px;background:#3a7ba6;"></div>
<div class="b" style="left:2859px;top:1678px;width:7px;height:12px;background:#555;"></div>
<div class="b" style="left:2873px;top:1333px;width:7px;height:9px;background:#e5534b;"></div>
<div class="b" style="left:0px;top:1756px;width:2880px;height:2px;background:#2b2b2b;"></div>
<div class="b" style="left:0px;top:1758px;width:2880px;height:42px;background:#181818;"></div>
<div class="b" style="left:0px;top:1758px;width:68px;height:42px;background:#3478cf;"></div>
<svg class="b" style="left:24px;top:1764px;" width="20" height="26" viewBox="0 0 20 26"><path d="M1.500 9L9.700 17L1.800 24.700M18 2.200L10.200 9.600L18 17.400" fill="none" stroke="#fff" stroke-width="2"/></svg>
<svg class="b" style="left:84px;top:1764.5px;" width="28" height="28" viewBox="0 0 28 28"><circle cx="13.600" cy="13.500" r="11" fill="none" stroke="#cccccc" stroke-width="2"/><path d="M9 9L18.200 18.200M18.200 9L9 18.200" stroke="#cccccc" stroke-width="2" fill="none"/></svg>
<span class="t" style="left:120.0px;top:1762px;font-size:24px;line-height:31px;color:#cccccc;letter-spacing:0.000px;">0</span>
<svg class="b" style="left:141px;top:1765px;" width="28" height="26" viewBox="0 0 28 26"><path d="M13.800 2.200L25 22.500H2.600Z" fill="none" stroke="#cccccc" stroke-width="2" stroke-linejoin="round"/><path d="M13.800 9V16M13.800 18V20.300" stroke="#cccccc" stroke-width="2.200" fill="none"/></svg>
<span class="t" style="left:177.5px;top:1762px;font-size:24px;line-height:31px;color:#cccccc;letter-spacing:0.000px;">0</span>
<svg class="b" style="left:224px;top:1766px;" width="26" height="26" viewBox="0 0 26 26"><circle cx="13" cy="9" r="2.500" fill="none" stroke="#cccccc" stroke-width="1.800"/><path d="M13 12L7 25M13 12L19 25M9.500 20H16.500M7.500 14.500Q4 9 7.500 3.500M18.500 14.500Q22 9 18.500 3.500M4 17Q-1 9 4 1M22 17Q27 9 22 1" fill="none" stroke="#cccccc" stroke-width="1.800"/></svg>
<span class="t" style="left:259.0px;top:1762px;font-size:24px;line-height:31px;color:#cccccc;letter-spacing:0.000px;">0</span>
<svg class="b" style="left:306px;top:1765px;" width="22" height="26" viewBox="0 0 22 26"><path d="M14.500 0.500L3 14.500H9.500L6 25.500L19.500 10.500H12.500Z" fill="#f5b52e"/></svg>
<span class="t" style="left:336.5px;top:1762px;font-size:24px;line-height:31px;color:#cccccc;letter-spacing:-0.120px;">BLACKBOX Chat</span>
<span class="t" style="left:556.5px;top:1762px;font-size:24px;line-height:31px;color:#cccccc;letter-spacing:0.357px;">Add Logs</span>
<svg class="b" style="left:692px;top:1768px;" width="26" height="20" viewBox="0 0 26 20"><path d="M1 7Q1 4.500 3.500 4.500H12Q10 1 13 1L18 4H23.500Q25.500 4 25.500 6Q25.500 8 23.500 8H19Q20 9.500 19 11Q20 12.500 18.500 14Q19 16 17 17H9Q6 17 5 15H1Z" fill="#f7b731"/><path d="M12.500 8H19M13 11H19M13.500 14H18.500" fill="none" stroke="#c98a1a" stroke-width="1"/></svg>
<span class="t" style="left:724.5px;top:1762px;font-size:24px;line-height:31px;color:#cccccc;letter-spacing:0.656px;">CyberCoder</span>
<span class="t" style="left:893.5px;top:1762px;font-size:24px;line-height:31px;color:#cccccc;letter-spacing:0.473px;">Improve Code</span>
<span class="t" style="left:1082.5px;top:1762px;font-size:24px;line-height:31px;color:#cccccc;letter-spacing:0.303px;">Share Code Link</span>
<span class="t" style="left:1300.0px;top:1762px;font-size:24px;line-height:31px;color:#cccccc;letter-spacing:0.460px;">Open Website</span>
<svg class="b" style="left:1568px;top:1769px;" width="24" height="18" viewBox="0 0 24 18"><path d="M1.500 11Q4 2.500 12 2.500Q20 2.500 22.500 11" fill="none" stroke="#cccccc" stroke-width="2"/><circle cx="12" cy="11" r="4" fill="none" stroke="#cccccc" stroke-width="2"/></svg>
<span class="t" style="left:1602.0px;top:1762px;font-size:24px;line-height:31px;color:#cccccc;letter-spacing:0.133px;">Watch Sass</span>
<span class="t" style="left:1765.0px;top:1762px;font-size:24px;line-height:31px;color:#cccccc;letter-spacing:0.447px;">Ln 59, Col 1</span>
<span class="t" style="left:1934.5px;top:1762px;font-size:24px;line-height:31px;color:#cccccc;letter-spacing:0.340px;">Spaces: 4</span>
<span class="t" style="left:2079.0px;top:1762px;font-size:24px;line-height:31px;color:#cccccc;letter-spacing:0.770px;">UTF-8</span>
<span class="t" style="left:2183.5px;top:1762px;font-size:24px;line-height:31px;color:#cccccc;letter-spacing:-1.680px;">LF</span>
<span class="t" style="left:2243.0px;top:1762px;font-size:24px;line-height:31px;color:#cccccc;letter-spacing:-1.220px;">PHP</span>
<svg class="b" style="left:2325px;top:1765px;" width="24" height="26" viewBox="0 0 24 26"><circle cx="12" cy="11" r="10" fill="none" stroke="#cccccc" stroke-width="2"/><circle cx="12" cy="11" r="5.500" fill="none" stroke="#cccccc" stroke-width="2"/><circle cx="12" cy="11" r="2" fill="#cccccc"/><path d="M12 13V25" stroke="#cccccc" stroke-width="4"/></svg>
<span class="t" style="left:2359.0px;top:1762px;font-size:24px;line-height:31px;color:#cccccc;letter-spacing:-0.007px;">Go Live</span>
<svg class="b" style="left:2475px;top:1765px;" width="22" height="26" viewBox="0 0 22 26"><path d="M14.500 0.500L3 14.500H9.500L6 25.500L19.500 10.500H12.500Z" fill="#f5b52e"/></svg>
<span class="t" style="left:2506.5px;top:1762px;font-size:24px;line-height:31px;color:#cccccc;letter-spacing:0.004px;">BLACKBOXAI: Open Chat</span>
<svg class="b" style="left:2824px;top:1765px;" width="24" height="26" viewBox="0 0 24 26"><path d="M3 19.500H21Q18.500 17 18.500 13V10Q18.500 2.500 12 2.500Q5.500 2.500 5.500 10V13Q5.500 17 3 19.500ZM9.500 22Q12 25 14.500 22" fill="none" stroke="#cccccc" stroke-width="2" stroke-linejoin="round"/></svg>
</div>
</body></html>
